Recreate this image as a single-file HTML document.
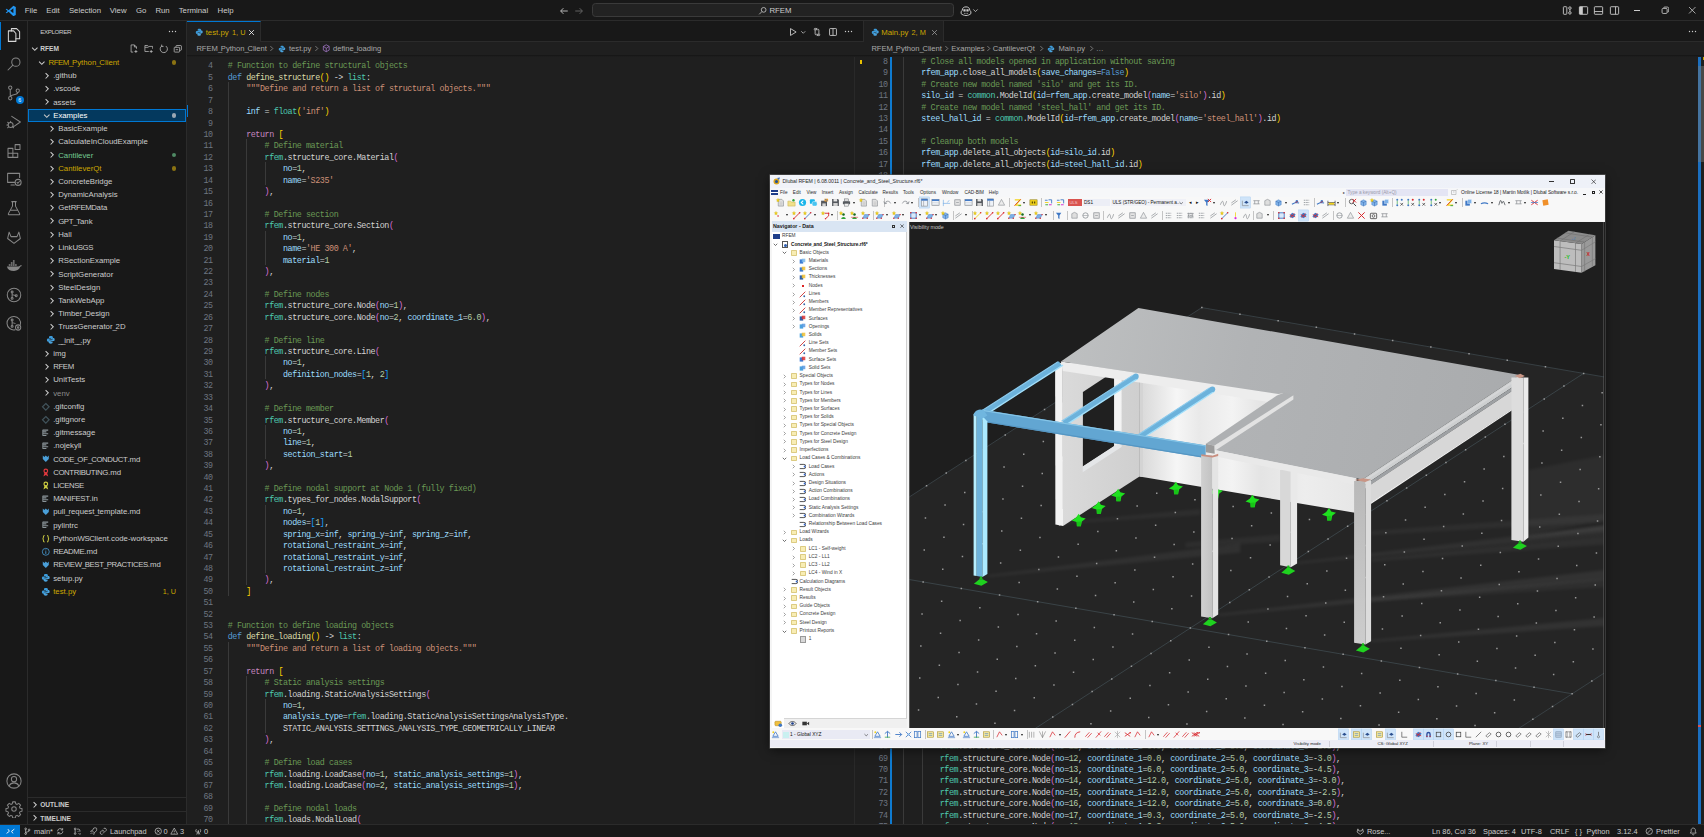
<!DOCTYPE html>
<html><head><meta charset="utf-8"><title>VS Code</title>
<style>
*{box-sizing:border-box;margin:0;padding:0}
html,body{width:1704px;height:837px;overflow:hidden;background:#1f1f1f}
body{font-family:"Liberation Sans",sans-serif;font-size:7.8px;color:#cccccc;position:relative}
i{font-style:normal}
.abs{position:absolute}
#title{position:absolute;left:0;top:0;width:1704px;height:21px;background:#181818;border-bottom:1px solid #2b2b2b}
#act{position:absolute;left:0;top:21px;width:28px;height:803px;background:#181818;border-right:1px solid #2b2b2b}
#side{position:absolute;left:28px;top:21px;width:158.500px;height:803px;background:#181818;border-right:1px solid #2b2b2b;overflow:hidden}
#status{position:absolute;left:0;top:824px;width:1704px;height:13px;background:#181818;border-top:1px solid #2b2b2b;font-size:7.400px;line-height:12px;white-space:nowrap}
.mi{position:absolute;top:5.500px;line-height:10px;font-size:7.800px;color:#cccccc;white-space:nowrap}
.tabs{position:absolute;top:21px;height:21px;background:#181818;border-bottom:1px solid #2b2b2b}
.tab{position:absolute;top:0;height:21px;background:#1f1f1f;border-right:1px solid #2b2b2b}
.bc{position:absolute;top:42px;height:13.400px;background:#1f1f1f;line-height:13.400px;white-space:nowrap;color:#a9a9a9;font-size:7.600px}
.bc span,.bc svg{position:absolute}
.ed{position:absolute;top:55.400px;height:768.600px;background:#1f1f1f;overflow:hidden}
.ln{position:absolute;left:0;height:11.420px;line-height:11.420px;width:100%;white-space:pre;font-family:"Liberation Mono",monospace;font-size:8.400px;letter-spacing:-0.420px;color:#d4d4d4}
.ln span{position:absolute;top:0}
.no{width:30px;text-align:right;color:#6e7681}
.s{color:#ce9178}.c{color:#6a9955}.n{color:#b5cea8}.b1{color:#ffd700}.b2{color:#da70d6}.b3{color:#179fff}.k{color:#569cd6}.r{color:#c586c0}.f{color:#dcdcaa}.t{color:#4ec9b0}.v{color:#9cdcfe}
.ig{position:absolute;width:1px;background:#3a3a3a}
.tr{position:absolute;left:0;width:158px;height:13.220px;line-height:13.220px;white-space:nowrap;font-size:7.800px}
.tr.sel{background:#04395e;outline:1px solid #0078d4;outline-offset:-1px}
.tr span{position:absolute;top:0}
.tw{width:9.600px;height:13.220px}
.chev{position:absolute;left:0;top:1.800px;width:9.600px;height:9.600px}
.fi{position:absolute;left:0;top:1.800px;width:9.600px;height:9.600px}
.dot{left:144px;top:4.400px !important;width:4.400px;height:4.400px;border-radius:50%}
.bdg{right:10px;color:#cca700;font-size:7.200px}
.sh{position:absolute;left:0;width:158px;height:13.220px;line-height:13.220px;font-size:6.600px;font-weight:bold;color:#cccccc}
.u{letter-spacing:-1.300px}
.uc{letter-spacing:-.38px}
.sb{position:absolute;top:0.500px;white-space:nowrap}

#rf{position:absolute;left:770px;top:175px;width:835px;height:572.800px;background:#f5f5f5;box-shadow:0 2px 10px rgba(0,0,0,.55),0 0 0 .6px #6a6a6a;font-size:5.200px;color:#222;overflow:hidden;z-index:10}
#rf .a{position:absolute;white-space:nowrap}
#rf .t{position:absolute;white-space:nowrap;line-height:8.200px;height:8.200px;color:#3c3c3c;font-size:4.800px}
#rf .t b{font-size:4.750px;color:#111}
#rf .u{letter-spacing:-.7px}
.tbi{position:absolute;width:9px;height:9px}
.sep{position:absolute;width:.6px;height:9px;background:#c4c4c4}
.dd{position:absolute;width:0;height:0;border-left:1.700px solid transparent;border-right:1.700px solid transparent;border-top:2.200px solid #1a1a1a}
.fold{position:absolute;width:6.600px;height:5.600px;background:#f8edb4;border:.5px solid #dccb82;border-radius:.8px}
.nch{position:absolute;width:5px;height:5px}
</style></head>
<body>
<div id=title><svg class=abs style="left:4.800px;top:4.800px" width="11.500" height="11.500" viewBox="0 0 24 24"><path d="M17.500 1.500L7.500 11 3.500 8 1.500 9l4 3.500-4 3.500 2 1 4-3 10 9.500 5-2.500V4z" fill="#2196f3"/><path d="M17.500 7v10l-6.500-5z" fill="#181818"/></svg><span class=mi style="left:24.7px">File</span><span class=mi style="left:46.2px">Edit</span><span class=mi style="left:68.9px">Selection</span><span class=mi style="left:109.8px">View</span><span class=mi style="left:136.0px">Go</span><span class=mi style="left:155.4px">Run</span><span class=mi style="left:178.7px">Terminal</span><span class=mi style="left:217.5px">Help</span><svg class=abs style="left:558.500px;top:5.500px" width="10" height="10" viewBox="0 0 16 16"><path d="M14 8H3M7 3.500L2.500 8 7 12.500" fill="none" stroke="#cccccc" stroke-width="1.400"/></svg><svg class=abs style="left:574px;top:5.500px" width="10" height="10" viewBox="0 0 16 16"><path d="M2 8h11M9 3.500L13.500 8 9 12.500" fill="none" stroke="#6b6b6b" stroke-width="1.400"/></svg><div class=abs style="left:591.500px;top:3.200px;width:362px;height:14.200px;background:#222222;border:1px solid #3a3a3a;border-radius:3.500px"></div><svg class=abs style="left:758px;top:5.500px" width="9.500" height="9.500" viewBox="0 0 16 16"><circle cx="9.500" cy="6.500" r="4" fill="none" stroke="#cccccc" stroke-width="1.300"/><path d="M6.500 9.500L2 14" stroke="#cccccc" stroke-width="1.300"/></svg><span class=mi style="left:769.4px">RFEM</span><svg class=abs style="left:959.500px;top:4.500px" width="12" height="12" viewBox="0 0 16 16"><path d="M3 7c0-3 2-4.500 5-4.500s5 1.500 5 4.500l1.500 2v2.500c-1.500 1.500-4 2.500-6.500 2.500s-5-1-6.500-2.500V9z" fill="none" stroke="#cccccc" stroke-width="1.300"/><path d="M4.500 5.500h3v3h-3zM8.500 5.500h3v3h-3z" fill="#cccccc"/><path d="M6.500 10.500v1.500M9.500 10.500v1.500" stroke="#cccccc" stroke-width="1.200"/></svg><svg class=abs style="left:972px;top:7px" width="7" height="7" viewBox="0 0 16 16"><path d="M3 5.500l5 5 5-5" fill="none" stroke="#cccccc" stroke-width="1.800"/></svg><svg class=abs style="left:1562px;top:5px" width="11" height="11" viewBox="0 0 16 16"><rect x="2" y="2.500" width="5" height="11" rx="1" fill="none" stroke="#cccccc" stroke-width="1.300"/><circle cx="11.500" cy="4.500" r="1.800" fill="none" stroke="#cccccc" stroke-width="1.300"/><circle cx="11.500" cy="11.500" r="1.800" fill="none" stroke="#cccccc" stroke-width="1.300"/><path d="M11.500 6.300v3.400" stroke="#cccccc" stroke-width="1.300"/></svg><svg class=abs style="left:1577.500px;top:5px" width="11" height="11" viewBox="0 0 16 16"><rect x="2" y="2.500" width="12" height="11" rx="1" fill="none" stroke="#cccccc" stroke-width="1.300"/><rect x="2" y="2.500" width="5" height="11" fill="#cccccc"/></svg><svg class=abs style="left:1593px;top:5px" width="11" height="11" viewBox="0 0 16 16"><rect x="2" y="2.500" width="12" height="11" rx="1" fill="none" stroke="#cccccc" stroke-width="1.300"/><path d="M2 9.500h12" stroke="#cccccc" stroke-width="1.300"/></svg><svg class=abs style="left:1608.500px;top:5px" width="11" height="11" viewBox="0 0 16 16"><rect x="2" y="2.500" width="12" height="11" rx="1" fill="none" stroke="#cccccc" stroke-width="1.300"/><path d="M9.500 2.500v11" stroke="#cccccc" stroke-width="1.300"/></svg><div class=abs style="left:1634px;top:10.200px;width:6px;height:0.800px;background:#cccccc"></div><svg class=abs style="left:1660.500px;top:6px" width="8.500" height="8.500" viewBox="0 0 16 16"><rect x="2" y="4.500" width="9.500" height="9.500" rx="2" fill="none" stroke="#cccccc" stroke-width="1.600"/><path d="M5 4V3.500c0-1 1-1.500 2-1.500h5c1.500 0 2.500 1 2.500 2.500v5c0 1-.5 2-1.500 2h-.8" fill="none" stroke="#cccccc" stroke-width="1.600"/></svg><svg class=abs style="left:1688px;top:6px" width="8.500" height="8.500" viewBox="0 0 16 16"><path d="M2 2l12 12M14 2L2 14" stroke="#cccccc" stroke-width="1.500"/></svg></div><div id=act><div class=abs style="left:0;top:-21px;width:28px;height:0"><div style="position:absolute;left:5px;top:26.4px;width:18px;height:18px"><svg width="18" height="18" viewBox="0 0 24 24"><path d="M8.500 6.500V3.500h7l4 4V17h-5" fill="none" stroke="#d7d7d7" stroke-width="1.350" stroke-linejoin="round" stroke-linecap="round"/><path d="M4.500 6.500h7l3 3.500V20.500h-10z" fill="none" stroke="#d7d7d7" stroke-width="1.350" stroke-linejoin="round" stroke-linecap="round"/></svg></div><div style="position:absolute;left:5px;top:55.2px;width:18px;height:18px"><svg width="18" height="18" viewBox="0 0 24 24"><circle cx="14.500" cy="9.500" r="5.500" fill="none" stroke="#868686" stroke-width="1.350" stroke-linejoin="round" stroke-linecap="round"/><path d="M10.500 13.500L4 20" fill="none" stroke="#868686" stroke-width="1.350" stroke-linejoin="round" stroke-linecap="round"/></svg></div><div style="position:absolute;left:5px;top:84.0px;width:18px;height:18px"><svg width="18" height="18" viewBox="0 0 24 24"><circle cx="7" cy="5" r="2.200" fill="none" stroke="#868686" stroke-width="1.350" stroke-linejoin="round" stroke-linecap="round"/><circle cx="7" cy="19" r="2.200" fill="none" stroke="#868686" stroke-width="1.350" stroke-linejoin="round" stroke-linecap="round"/><circle cx="17" cy="9" r="2.200" fill="none" stroke="#868686" stroke-width="1.350" stroke-linejoin="round" stroke-linecap="round"/><path d="M7 7.200v9.600M17 11.200c0 4-10 2-10 5.600" fill="none" stroke="#868686" stroke-width="1.350" stroke-linejoin="round" stroke-linecap="round"/></svg></div><div style="position:absolute;left:5px;top:112.8px;width:18px;height:18px"><svg width="18" height="18" viewBox="0 0 24 24"><path d="M9 4.500L20.500 12 11 18.500" fill="none" stroke="#868686" stroke-width="1.350" stroke-linejoin="round" stroke-linecap="round"/><circle cx="7.500" cy="16" r="3.300" fill="none" stroke="#868686" stroke-width="1.350" stroke-linejoin="round" stroke-linecap="round"/><path d="M7.500 12.700v-1.700M4.200 16H2.500M4.800 13.500L3.500 12.300M4.800 18.500L3.500 19.700M10.200 18.500l1.300 1.200" fill="none" stroke="#868686" stroke-width="1.350" stroke-linejoin="round" stroke-linecap="round"/></svg></div><div style="position:absolute;left:5px;top:141.6px;width:18px;height:18px"><svg width="18" height="18" viewBox="0 0 24 24"><path d="M4 8.500h6.500V15H17v5.500H4zM10.500 15H4M10.500 15v5.500" fill="none" stroke="#868686" stroke-width="1.350" stroke-linejoin="round" stroke-linecap="round"/><rect x="13.500" y="3.500" width="6.500" height="6.500" fill="none" stroke="#868686" stroke-width="1.350" stroke-linejoin="round" stroke-linecap="round"/></svg></div><div style="position:absolute;left:5px;top:170.4px;width:18px;height:18px"><svg width="18" height="18" viewBox="0 0 24 24"><path d="M13 16.500H3.500v-12h16V10M8 20h4.500" fill="none" stroke="#868686" stroke-width="1.350" stroke-linejoin="round" stroke-linecap="round"/><circle cx="17.500" cy="16.500" r="4" fill="none" stroke="#868686" stroke-width="1.350" stroke-linejoin="round" stroke-linecap="round"/><path d="M16 16.500l1.200 1.200 2-2.400" fill="none" stroke="#868686" stroke-width="1.350" stroke-linejoin="round" stroke-linecap="round" stroke-width="1.200"/></svg></div><div style="position:absolute;left:5px;top:199.2px;width:18px;height:18px"><svg width="18" height="18" viewBox="0 0 24 24"><path d="M9 3.500h6M10 3.500v6L4.500 19.500c-.3.700.2 1.500 1 1.500h13c.8 0 1.300-.8 1-1.500L14 9.500v-6M7.500 15h9" fill="none" stroke="#868686" stroke-width="1.350" stroke-linejoin="round" stroke-linecap="round"/></svg></div><div style="position:absolute;left:5px;top:228.0px;width:18px;height:18px"><svg width="18" height="18" viewBox="0 0 24 24"><path d="M12 20.500L3.500 14l2-8.500 2.500 6h8l2.500-6 2 8.500z" fill="none" stroke="#868686" stroke-width="1.350" stroke-linejoin="round" stroke-linecap="round"/></svg></div><div style="position:absolute;left:5px;top:256.8px;width:18px;height:18px"><svg width="18" height="18" viewBox="0 0 24 24"><path d="M2.500 12.500h15.500c.8 0 2-.5 2.500-1.500 1 .3 1.800.2 2.200 0-.3 1-1.200 1.800-2.500 2-1 3.500-4 5.500-8.200 5.500-5 0-8.700-2-9.500-6z" fill="#868686"/><path d="M5 11.500h2.200v-2H5zM7.800 11.500H10v-2H7.800zM10.600 11.500h2.200v-2h-2.200zM13.400 11.500h2.200v-2h-2.200zM7.800 8.900H10v-2H7.800zM10.600 8.900h2.200v-2h-2.200zM10.600 6.300h2.200v-2h-2.200z" fill="#868686"/></svg></div><div style="position:absolute;left:5px;top:285.6px;width:18px;height:18px"><svg width="18" height="18" viewBox="0 0 24 24"><circle cx="12" cy="12" r="9" fill="none" stroke="#868686" stroke-width="1.350" stroke-linejoin="round" stroke-linecap="round"/><circle cx="9.500" cy="8" r="1.300" fill="none" stroke="#868686" stroke-width="1.350" stroke-linejoin="round" stroke-linecap="round"/><circle cx="9.500" cy="16.500" r="1.300" fill="none" stroke="#868686" stroke-width="1.350" stroke-linejoin="round" stroke-linecap="round"/><circle cx="15" cy="13" r="1.300" fill="none" stroke="#868686" stroke-width="1.350" stroke-linejoin="round" stroke-linecap="round"/><path d="M9.500 9.300v5.900M9.500 11.500l4.300 1.200" fill="none" stroke="#868686" stroke-width="1.350" stroke-linejoin="round" stroke-linecap="round"/></svg></div><div style="position:absolute;left:5px;top:314.4px;width:18px;height:18px"><svg width="18" height="18" viewBox="0 0 24 24"><path d="M20.500 14a9 9 0 1 0-7 7" fill="none" stroke="#868686" stroke-width="1.350" stroke-linejoin="round" stroke-linecap="round"/><circle cx="9.500" cy="8" r="1.300" fill="none" stroke="#868686" stroke-width="1.350" stroke-linejoin="round" stroke-linecap="round"/><circle cx="9.500" cy="16.500" r="1.300" fill="none" stroke="#868686" stroke-width="1.350" stroke-linejoin="round" stroke-linecap="round"/><path d="M9.500 9.300v5.900M9.500 11.500l4 1" fill="none" stroke="#868686" stroke-width="1.350" stroke-linejoin="round" stroke-linecap="round"/><circle cx="17.500" cy="18" r="3.500" fill="none" stroke="#868686" stroke-width="1.350" stroke-linejoin="round" stroke-linecap="round"/><circle cx="17.500" cy="18" r="1" fill="none" stroke="#868686" stroke-width="1.350" stroke-linejoin="round" stroke-linecap="round"/></svg></div><div style="position:absolute;left:5px;top:771.6px;width:18px;height:18px"><svg width="18" height="18" viewBox="0 0 24 24"><circle cx="12" cy="12" r="9.500" fill="none" stroke="#868686" stroke-width="1.350" stroke-linejoin="round" stroke-linecap="round"/><circle cx="12" cy="9.500" r="3.500" fill="none" stroke="#868686" stroke-width="1.350" stroke-linejoin="round" stroke-linecap="round"/><path d="M5.500 18.500c1.500-3 4-4 6.500-4s5 1 6.500 4" fill="none" stroke="#868686" stroke-width="1.350" stroke-linejoin="round" stroke-linecap="round"/></svg></div><div style="position:absolute;left:5px;top:800.4px;width:18px;height:18px"><svg width="18" height="18" viewBox="0 0 24 24"><circle cx="12" cy="12" r="3" fill="none" stroke="#868686" stroke-width="1.350" stroke-linejoin="round" stroke-linecap="round"/><path d="M10.200 2.500h3.600l.5 2.600 1.800.8 2.200-1.500 2.500 2.500-1.500 2.200.8 1.800 2.600.5v3.600l-2.600.5-.8 1.800 1.500 2.200-2.500 2.500-2.200-1.500-1.800.8-.5 2.600h-3.600l-.5-2.600-1.800-.8-2.200 1.500-2.500-2.500 1.500-2.200-.8-1.800-2.600-.5v-3.600l2.600-.5.8-1.800-1.500-2.200 2.500-2.500 2.200 1.500 1.800-.8z" fill="none" stroke="#868686" stroke-width="1.350" stroke-linejoin="round" stroke-linecap="round" stroke-width="1.300"/></svg></div><div style="position:absolute;left:0;top:21.5px;width:1.2px;height:28px;background:#0078d4"></div><div style="position:absolute;left:15.5px;top:95.5px;width:8.6px;height:8.6px;border-radius:50%;background:#0078d4;color:#fff;font-size:5.4px;line-height:8.6px;text-align:center">6</div></div></div><div id=side><span class=abs style="left:12.200px;top:5.500px;line-height:10px;font-size:6.200px;letter-spacing:-.35px;color:#cccccc">EXPLORER</span><svg class=abs style="left:140.0px;top:9.2px" width="9" height="3" viewBox="0 0 18 6"><circle cx="3" cy="3" r="1.400" fill="#cccccc"/><circle cx="9" cy="3" r="1.400" fill="#cccccc"/><circle cx="15" cy="3" r="1.400" fill="#cccccc"/></svg><div class=sh style="top:21px"><svg class=abs style="left:2px;top:2px;width:9.600px;height:9.600px" viewBox="0 0 16 16"><path d="M3.5 6l4.5 4.5L12.5 6" fill="none" stroke="#cccccc" stroke-width="1.7"/></svg><span class=abs style="left:12.200px">RFEM</span><svg class=abs style="left:101px;top:2px" width="9.600" height="9.600" viewBox="0 0 16 16"><path d="M9 1.500H3.500v12H7M9 1.500l3.500 3.500V8M9 1.500V5h3.500M11.500 10v5M9 12.500h5" fill="none" stroke="#c5c5c5" stroke-width="1.200"/></svg><svg class=abs style="left:115.500px;top:2px" width="9.600" height="9.600" viewBox="0 0 16 16"><path d="M8 12.500H1.500v-10H6l1.500 1.500h7V8M1.500 5.500H7.500M12 10v5M9.500 12.500h5" fill="none" stroke="#c5c5c5" stroke-width="1.200"/></svg><svg class=abs style="left:130.500px;top:2px" width="9.600" height="9.600" viewBox="0 0 16 16"><path d="M4.500 3.500A6 6 0 1 0 11.500 3.500M4.500 1v3h3" fill="none" stroke="#c5c5c5" stroke-width="1.300"/></svg><svg class=abs style="left:145px;top:2px" width="9.600" height="9.600" viewBox="0 0 16 16"><rect x="2" y="5.500" width="9" height="8" rx="1" fill="none" stroke="#c5c5c5" stroke-width="1.200"/><path d="M5 5.500V3.500c0-.5.500-1 1-1h7c.5 0 1 .5 1 1v6c0 .5-.5 1-1 1h-2M4.500 9.500h4" fill="none" stroke="#c5c5c5" stroke-width="1.200"/></svg></div><div class=abs style="left:0;top:-21px;width:158px;height:0"><div class="tr" style="top:56.00px"><span class=tw style="left:9.1px"><svg class=chev viewBox="0 0 16 16"><path d="M3.5 6l4.5 4.5L12.5 6" fill="none" stroke="#cccccc" stroke-width="1.7"/></svg></span><span class=tl style="left:20.4px;color:#cca700"><i class=uc>RFEM</i><i class=u>_</i>Python<i class=u>_</i>Client</span><span class=dot style="background:#8a7212"></span></div>
<div class="tr" style="top:69.22px"><span class=tw style="left:13.9px"><svg class=chev viewBox="0 0 16 16"><path d="M6 3.5l4.5 4.5L6 12.5" fill="none" stroke="#cccccc" stroke-width="1.7"/></svg></span><span class=tl style="left:25.2px;color:#cccccc">.github</span></div>
<div class="tr" style="top:82.44px"><span class=tw style="left:13.9px"><svg class=chev viewBox="0 0 16 16"><path d="M6 3.5l4.5 4.5L6 12.5" fill="none" stroke="#cccccc" stroke-width="1.7"/></svg></span><span class=tl style="left:25.2px;color:#cccccc">.vscode</span></div>
<div class="tr" style="top:95.66px"><span class=tw style="left:13.9px"><svg class=chev viewBox="0 0 16 16"><path d="M6 3.5l4.5 4.5L6 12.5" fill="none" stroke="#cccccc" stroke-width="1.7"/></svg></span><span class=tl style="left:25.2px;color:#cccccc">assets</span></div>
<div class="tr sel" style="top:108.88px"><span class=tw style="left:13.9px"><svg class=chev viewBox="0 0 16 16"><path d="M3.5 6l4.5 4.5L12.5 6" fill="none" stroke="#cccccc" stroke-width="1.7"/></svg></span><span class=tl style="left:25.2px;color:#ffffff">Examples</span><span class=dot style="background:#9aa7b3"></span></div>
<div class="tr" style="top:122.10px"><span class=tw style="left:18.9px"><svg class=chev viewBox="0 0 16 16"><path d="M6 3.5l4.5 4.5L6 12.5" fill="none" stroke="#cccccc" stroke-width="1.7"/></svg></span><span class=tl style="left:30.2px;color:#cccccc">BasicExample</span></div>
<div class="tr" style="top:135.32px"><span class=tw style="left:18.9px"><svg class=chev viewBox="0 0 16 16"><path d="M6 3.5l4.5 4.5L6 12.5" fill="none" stroke="#cccccc" stroke-width="1.7"/></svg></span><span class=tl style="left:30.2px;color:#cccccc">CalculateInCloudExample</span></div>
<div class="tr" style="top:148.54px"><span class=tw style="left:18.9px"><svg class=chev viewBox="0 0 16 16"><path d="M6 3.5l4.5 4.5L6 12.5" fill="none" stroke="#cccccc" stroke-width="1.7"/></svg></span><span class=tl style="left:30.2px;color:#73c991">Cantilever</span><span class=dot style="background:#4f8a64"></span></div>
<div class="tr" style="top:161.76px"><span class=tw style="left:18.9px"><svg class=chev viewBox="0 0 16 16"><path d="M6 3.5l4.5 4.5L6 12.5" fill="none" stroke="#cccccc" stroke-width="1.7"/></svg></span><span class=tl style="left:30.2px;color:#cca700">CantileverQt</span><span class=dot style="background:#8a7212"></span></div>
<div class="tr" style="top:174.98px"><span class=tw style="left:18.9px"><svg class=chev viewBox="0 0 16 16"><path d="M6 3.5l4.5 4.5L6 12.5" fill="none" stroke="#cccccc" stroke-width="1.7"/></svg></span><span class=tl style="left:30.2px;color:#cccccc">ConcreteBridge</span></div>
<div class="tr" style="top:188.20px"><span class=tw style="left:18.9px"><svg class=chev viewBox="0 0 16 16"><path d="M6 3.5l4.5 4.5L6 12.5" fill="none" stroke="#cccccc" stroke-width="1.7"/></svg></span><span class=tl style="left:30.2px;color:#cccccc">DynamicAnalysis</span></div>
<div class="tr" style="top:201.42px"><span class=tw style="left:18.9px"><svg class=chev viewBox="0 0 16 16"><path d="M6 3.5l4.5 4.5L6 12.5" fill="none" stroke="#cccccc" stroke-width="1.7"/></svg></span><span class=tl style="left:30.2px;color:#cccccc">Get<i class=uc>RFEMD</i>ata</span></div>
<div class="tr" style="top:214.64px"><span class=tw style="left:18.9px"><svg class=chev viewBox="0 0 16 16"><path d="M6 3.5l4.5 4.5L6 12.5" fill="none" stroke="#cccccc" stroke-width="1.7"/></svg></span><span class=tl style="left:30.2px;color:#cccccc"><i class=uc>GPT</i><i class=u>_</i>Tank</span></div>
<div class="tr" style="top:227.86px"><span class=tw style="left:18.9px"><svg class=chev viewBox="0 0 16 16"><path d="M6 3.5l4.5 4.5L6 12.5" fill="none" stroke="#cccccc" stroke-width="1.7"/></svg></span><span class=tl style="left:30.2px;color:#cccccc">Hall</span></div>
<div class="tr" style="top:241.08px"><span class=tw style="left:18.9px"><svg class=chev viewBox="0 0 16 16"><path d="M6 3.5l4.5 4.5L6 12.5" fill="none" stroke="#cccccc" stroke-width="1.7"/></svg></span><span class=tl style="left:30.2px;color:#cccccc">Link<i class=uc>USGS</i></span></div>
<div class="tr" style="top:254.30px"><span class=tw style="left:18.9px"><svg class=chev viewBox="0 0 16 16"><path d="M6 3.5l4.5 4.5L6 12.5" fill="none" stroke="#cccccc" stroke-width="1.7"/></svg></span><span class=tl style="left:30.2px;color:#cccccc">RSectionExample</span></div>
<div class="tr" style="top:267.52px"><span class=tw style="left:18.9px"><svg class=chev viewBox="0 0 16 16"><path d="M6 3.5l4.5 4.5L6 12.5" fill="none" stroke="#cccccc" stroke-width="1.7"/></svg></span><span class=tl style="left:30.2px;color:#cccccc">ScriptGenerator</span></div>
<div class="tr" style="top:280.74px"><span class=tw style="left:18.9px"><svg class=chev viewBox="0 0 16 16"><path d="M6 3.5l4.5 4.5L6 12.5" fill="none" stroke="#cccccc" stroke-width="1.7"/></svg></span><span class=tl style="left:30.2px;color:#cccccc">SteelDesign</span></div>
<div class="tr" style="top:293.96px"><span class=tw style="left:18.9px"><svg class=chev viewBox="0 0 16 16"><path d="M6 3.5l4.5 4.5L6 12.5" fill="none" stroke="#cccccc" stroke-width="1.7"/></svg></span><span class=tl style="left:30.2px;color:#cccccc">TankWebApp</span></div>
<div class="tr" style="top:307.18px"><span class=tw style="left:18.9px"><svg class=chev viewBox="0 0 16 16"><path d="M6 3.5l4.5 4.5L6 12.5" fill="none" stroke="#cccccc" stroke-width="1.7"/></svg></span><span class=tl style="left:30.2px;color:#cccccc">Timber<i class=u>_</i>Design</span></div>
<div class="tr" style="top:320.40px"><span class=tw style="left:18.9px"><svg class=chev viewBox="0 0 16 16"><path d="M6 3.5l4.5 4.5L6 12.5" fill="none" stroke="#cccccc" stroke-width="1.7"/></svg></span><span class=tl style="left:30.2px;color:#cccccc">TrussGenerator<i class=u>_</i>2D</span></div>
<div class="tr" style="top:333.62px"><span class=tw style="left:18.4px"><svg class=fi viewBox="0 0 16 16"><path d="M8 1.5c-2.2 0-3 .8-3 2V5h3.2v.8H3.6C2.3 5.800 1.500 6.800 1.500 8.500s.8 2.700 2 2.700H5V9.400c0-1.200 1-2 2.200-2h2.600c1 0 1.700-.8 1.700-1.800V3.500c0-1.200-1.300-2-3.500-2z" fill="#3b9ad9"/><path d="M8 14.500c2.200 0 3-.8 3-2V11H7.800v-.8h4.600c1.300 0 2.100-1 2.100-2.700s-.8-2.700-2-2.700H11v1.800c0 1.200-1 2-2.200 2H6.200c-1 0-1.700.8-1.700 1.800v2.100c0 1.200 1.300 2 3.500 2z" fill="#4aa3dd"/></svg></span><span class=tl style="left:30.2px;color:#cccccc"><i class=u>_</i><i class=u>_</i>init<i class=u>_</i><i class=u>_</i>.py</span></div>
<div class="tr" style="top:346.84px"><span class=tw style="left:13.9px"><svg class=chev viewBox="0 0 16 16"><path d="M6 3.5l4.5 4.5L6 12.5" fill="none" stroke="#cccccc" stroke-width="1.7"/></svg></span><span class=tl style="left:25.2px;color:#cccccc">img</span></div>
<div class="tr" style="top:360.06px"><span class=tw style="left:13.9px"><svg class=chev viewBox="0 0 16 16"><path d="M6 3.5l4.5 4.5L6 12.5" fill="none" stroke="#cccccc" stroke-width="1.7"/></svg></span><span class=tl style="left:25.2px;color:#cccccc"><i class=uc>RFEM</i></span></div>
<div class="tr" style="top:373.28px"><span class=tw style="left:13.9px"><svg class=chev viewBox="0 0 16 16"><path d="M6 3.5l4.5 4.5L6 12.5" fill="none" stroke="#cccccc" stroke-width="1.7"/></svg></span><span class=tl style="left:25.2px;color:#cccccc">UnitTests</span></div>
<div class="tr" style="top:386.50px"><span class=tw style="left:13.9px"><svg class=chev viewBox="0 0 16 16"><path d="M6 3.5l4.5 4.5L6 12.5" fill="none" stroke="#cccccc" stroke-width="1.7"/></svg></span><span class=tl style="left:25.2px;color:#8c8c8c">venv</span></div>
<div class="tr" style="top:399.72px"><span class=tw style="left:13.4px"><svg class=fi viewBox="0 0 16 16"><path d="M8 2.500L13.500 8 8 13.500 2.500 8z" fill="none" stroke="#41535b" stroke-width="2"/></svg></span><span class=tl style="left:25.2px;color:#cccccc">.gitconfig</span></div>
<div class="tr" style="top:412.94px"><span class=tw style="left:13.4px"><svg class=fi viewBox="0 0 16 16"><path d="M8 2.500L13.500 8 8 13.500 2.500 8z" fill="none" stroke="#41535b" stroke-width="2"/></svg></span><span class=tl style="left:25.2px;color:#cccccc">.gitignore</span></div>
<div class="tr" style="top:426.16px"><span class=tw style="left:13.4px"><svg class=fi viewBox="0 0 16 16"><path d="M3 3.500h9M3 6.500h6M3 9.500h9M3 12.500h6" stroke="#8a9499" stroke-width="1.800"/><path d="M3 3v10" stroke="#8a9499" stroke-width="1.500"/></svg></span><span class=tl style="left:25.2px;color:#cccccc">.gitmessage</span></div>
<div class="tr" style="top:439.38px"><span class=tw style="left:13.4px"><svg class=fi viewBox="0 0 16 16"><path d="M3 3.500h9M3 6.500h6M3 9.500h9M3 12.500h6" stroke="#8a9499" stroke-width="1.800"/><path d="M3 3v10" stroke="#8a9499" stroke-width="1.500"/></svg></span><span class=tl style="left:25.2px;color:#cccccc">.nojekyll</span></div>
<div class="tr" style="top:452.60px"><span class=tw style="left:13.4px"><svg class=fi viewBox="0 0 16 16"><path d="M3 2.500v6l5 5 5-5v-6l-2.500 2.500-2.500-2.500-2.500 2.500z" fill="#4a9fd8"/></svg></span><span class=tl style="left:25.2px;color:#cccccc"><i class=uc>CODE</i><i class=u>_</i>OF<i class=u>_</i><i class=uc>CONDUCT</i>.md</span></div>
<div class="tr" style="top:465.82px"><span class=tw style="left:13.4px"><svg class=fi viewBox="0 0 16 16"><circle cx="8" cy="5" r="3" fill="none" stroke="#e0383e" stroke-width="2"/><path d="M6 7.500L4 14l4-2.500 4 2.500-2-6.500" fill="#e0383e"/></svg></span><span class=tl style="left:25.2px;color:#cccccc"><i class=uc>CONTRIBUTING</i>.md</span></div>
<div class="tr" style="top:479.04px"><span class=tw style="left:13.4px"><svg class=fi viewBox="0 0 16 16"><circle cx="8" cy="5" r="3" fill="none" stroke="#cbcb41" stroke-width="2"/><path d="M6 7.500L4 14l4-2.500 4 2.500-2-6.500" fill="#cbcb41"/></svg></span><span class=tl style="left:25.2px;color:#cccccc"><i class=uc>LICENSE</i></span></div>
<div class="tr" style="top:492.26px"><span class=tw style="left:13.4px"><svg class=fi viewBox="0 0 16 16"><path d="M3 3.500h9M3 6.500h6M3 9.500h9M3 12.500h6" stroke="#8a9499" stroke-width="1.800"/><path d="M3 3v10" stroke="#8a9499" stroke-width="1.500"/></svg></span><span class=tl style="left:25.2px;color:#cccccc"><i class=uc>MANIFEST</i>.in</span></div>
<div class="tr" style="top:505.48px"><span class=tw style="left:13.4px"><svg class=fi viewBox="0 0 16 16"><path d="M3 2.500v6l5 5 5-5v-6l-2.500 2.500-2.500-2.500-2.500 2.500z" fill="#4a9fd8"/></svg></span><span class=tl style="left:25.2px;color:#cccccc">pull<i class=u>_</i>request<i class=u>_</i>template.md</span></div>
<div class="tr" style="top:518.70px"><span class=tw style="left:13.4px"><svg class=fi viewBox="0 0 16 16"><path d="M3 3.500h9M3 6.500h6M3 9.500h9M3 12.500h6" stroke="#8a9499" stroke-width="1.800"/><path d="M3 3v10" stroke="#8a9499" stroke-width="1.500"/></svg></span><span class=tl style="left:25.2px;color:#cccccc">pylintrc</span></div>
<div class="tr" style="top:531.92px"><span class=tw style="left:13.4px"><svg class=fi viewBox="0 0 16 16"><path d="M6 2.500c-2 0-2 1-2 2.500s0 3-1.500 3C4 8 4 9.500 4 11s0 2.500 2 2.500M10 2.500c2 0 2 1 2 2.500s0 3 1.500 3C12 8 12 9.500 12 11s0 2.500-2 2.500" fill="none" stroke="#cbcb41" stroke-width="1.700"/></svg></span><span class=tl style="left:25.2px;color:#cccccc">Python<i class=uc>WSC</i>lient.code-workspace</span></div>
<div class="tr" style="top:545.14px"><span class=tw style="left:13.4px"><svg class=fi viewBox="0 0 16 16"><circle cx="8" cy="8" r="5.800" fill="none" stroke="#4a9fd8" stroke-width="1.300"/><path d="M8 7v4.500M8 4.300v1.400" stroke="#4a9fd8" stroke-width="1.500"/></svg></span><span class=tl style="left:25.2px;color:#cccccc"><i class=uc>README</i>.md</span></div>
<div class="tr" style="top:558.36px"><span class=tw style="left:13.4px"><svg class=fi viewBox="0 0 16 16"><path d="M3 2.500v6l5 5 5-5v-6l-2.500 2.500-2.500-2.500-2.500 2.500z" fill="#4a9fd8"/></svg></span><span class=tl style="left:25.2px;color:#cccccc"><i class=uc>REVIEW</i><i class=u>_</i><i class=uc>BEST</i><i class=u>_</i><i class=uc>PRACTICES</i>.md</span></div>
<div class="tr" style="top:571.58px"><span class=tw style="left:13.4px"><svg class=fi viewBox="0 0 16 16"><path d="M8 1.5c-2.2 0-3 .8-3 2V5h3.2v.8H3.6C2.3 5.800 1.500 6.800 1.500 8.500s.8 2.700 2 2.700H5V9.400c0-1.200 1-2 2.200-2h2.600c1 0 1.700-.8 1.700-1.800V3.500c0-1.200-1.300-2-3.500-2z" fill="#3b9ad9"/><path d="M8 14.500c2.200 0 3-.8 3-2V11H7.800v-.8h4.600c1.300 0 2.100-1 2.100-2.700s-.8-2.700-2-2.700H11v1.800c0 1.200-1 2-2.200 2H6.200c-1 0-1.700.8-1.700 1.800v2.100c0 1.200 1.300 2 3.500 2z" fill="#4aa3dd"/></svg></span><span class=tl style="left:25.2px;color:#cccccc">setup.py</span></div>
<div class="tr" style="top:584.80px"><span class=tw style="left:13.4px"><svg class=fi viewBox="0 0 16 16"><path d="M8 1.5c-2.2 0-3 .8-3 2V5h3.2v.8H3.6C2.3 5.800 1.500 6.800 1.500 8.500s.8 2.700 2 2.700H5V9.400c0-1.200 1-2 2.200-2h2.600c1 0 1.700-.8 1.700-1.800V3.500c0-1.200-1.300-2-3.500-2z" fill="#3b9ad9"/><path d="M8 14.500c2.200 0 3-.8 3-2V11H7.800v-.8h4.600c1.300 0 2.100-1 2.100-2.700s-.8-2.700-2-2.700H11v1.800c0 1.200-1 2-2.200 2H6.200c-1 0-1.700.8-1.700 1.800v2.100c0 1.200 1.300 2 3.500 2z" fill="#4aa3dd"/></svg></span><span class=tl style="left:25.2px;color:#cca700">test.py</span><span class=bdg>1, U</span></div></div><div class=sh style="top:776.2px;border-top:1px solid #2b2b2b;height:13.400px"><svg class=abs style="left:2px;top:1.500px;width:9.600px;height:9.600px" viewBox="0 0 16 16"><path d="M6 3.5l4.5 4.5L6 12.5" fill="none" stroke="#cccccc" stroke-width="1.7"/></svg><span class=abs style="left:12.200px">OUTLINE</span></div><div class=sh style="top:789.6px;border-top:1px solid #2b2b2b;height:13.400px"><svg class=abs style="left:2px;top:1.500px;width:9.600px;height:9.600px" viewBox="0 0 16 16"><path d="M6 3.5l4.5 4.5L6 12.5" fill="none" stroke="#cccccc" stroke-width="1.7"/></svg><span class=abs style="left:12.200px">TIMELINE</span></div></div><div class=tabs style="left:186.500px;width:676px"><div class=tab style="left:0;width:74.500px;border-top:1px solid #0078d4"><svg class=abs style="left:8.0px;top:6.2px;width:8.5px;height:8.5px" viewBox="0 0 16 16"><path d="M8 1.5c-2.2 0-3 .8-3 2V5h3.2v.8H3.6C2.3 5.800 1.500 6.800 1.500 8.500s.8 2.700 2 2.700H5V9.400c0-1.200 1-2 2.200-2h2.600c1 0 1.700-.8 1.700-1.800V3.500c0-1.200-1.300-2-3.500-2z" fill="#3b9ad9"/><path d="M8 14.500c2.200 0 3-.8 3-2V11H7.800v-.8h4.600c1.300 0 2.100-1 2.100-2.700s-.8-2.700-2-2.700H11v1.800c0 1.200-1 2-2.200 2H6.200c-1 0-1.700.8-1.700 1.800v2.100c0 1.200 1.300 2 3.500 2z" fill="#4aa3dd"/></svg><span class=abs style="left:19.200px;top:5.600px;line-height:10px;color:#cca700;white-space:nowrap">test.py</span><span class=abs style="left:45.500px;top:5.600px;line-height:10px;color:#cca700;white-space:nowrap;font-size:7.400px">1, U</span><svg class=abs style="left:61.5px;top:7.2px" width="7" height="7" viewBox="0 0 16 16"><path d="M2.500 2.500l11 11M13.500 2.500l-11 11" stroke="#ffffff" stroke-width="1.800"/></svg></div><svg class=abs style="left:601.500px;top:5.500px" width="10" height="10" viewBox="0 0 16 16"><path d="M4 2.500v11L13 8z" fill="none" stroke="#cccccc" stroke-width="1.400" stroke-linejoin="round"/></svg><svg class=abs style="left:613.500px;top:7.500px" width="6.500" height="6.500" viewBox="0 0 16 16"><path d="M3 5.500l5 5 5-5" fill="none" stroke="#cccccc" stroke-width="1.800"/></svg><svg class=abs style="left:625.500px;top:5.500px" width="10" height="10" viewBox="0 0 16 16"><path d="M5 5v6c0 1 .5 1.500 1.500 1.500h3M11 11V5c0-1-.5-1.500-1.500-1.500h-3" fill="none" stroke="#cccccc" stroke-width="1.300"/><circle cx="5" cy="3.500" r="1.500" fill="none" stroke="#cccccc" stroke-width="1.200"/><circle cx="11" cy="12.500" r="1.500" fill="none" stroke="#cccccc" stroke-width="1.200"/><path d="M8 1.500L6 3.500 8 5.500M8 10.500l2 2-2 2" fill="none" stroke="#cccccc" stroke-width="1.200"/></svg><svg class=abs style="left:641px;top:5.500px" width="10" height="10" viewBox="0 0 16 16"><rect x="2.500" y="2.500" width="11" height="11" rx="1" fill="none" stroke="#cccccc" stroke-width="1.400"/><path d="M8 2.500v11" stroke="#cccccc" stroke-width="1.400"/></svg><svg class=abs style="left:657.5px;top:9.2px" width="9" height="3" viewBox="0 0 18 6"><circle cx="3" cy="3" r="1.400" fill="#cccccc"/><circle cx="9" cy="3" r="1.400" fill="#cccccc"/><circle cx="15" cy="3" r="1.400" fill="#cccccc"/></svg></div><div class=tabs style="left:863px;width:841px"><div class=tab style="left:0;width:80.500px"><svg class=abs style="left:7.5px;top:7.1px;width:8.5px;height:8.5px" viewBox="0 0 16 16"><path d="M8 1.5c-2.2 0-3 .8-3 2V5h3.2v.8H3.6C2.3 5.800 1.500 6.800 1.500 8.500s.8 2.700 2 2.700H5V9.400c0-1.200 1-2 2.200-2h2.600c1 0 1.700-.8 1.700-1.800V3.500c0-1.200-1.300-2-3.500-2z" fill="#3b9ad9"/><path d="M8 14.500c2.200 0 3-.8 3-2V11H7.800v-.8h4.600c1.300 0 2.100-1 2.100-2.700s-.8-2.700-2-2.700H11v1.800c0 1.200-1 2-2.200 2H6.200c-1 0-1.700.8-1.700 1.800v2.100c0 1.200 1.300 2 3.500 2z" fill="#4aa3dd"/></svg><span class=abs style="left:18.200px;top:6.500px;line-height:10px;color:#cca700;white-space:nowrap">Main.py</span><span class=abs style="left:48.500px;top:6.500px;line-height:10px;color:#cca700;white-space:nowrap;font-size:7.400px">2, M</span><svg class=abs style="left:67.5px;top:8.1px" width="7" height="7" viewBox="0 0 16 16"><path d="M2.500 2.500l11 11M13.500 2.500l-11 11" stroke="#9d9d9d" stroke-width="1.800"/></svg></div><svg class=abs style="left:824.5px;top:9.2px" width="9" height="3" viewBox="0 0 18 6"><circle cx="3" cy="3" r="1.400" fill="#cccccc"/><circle cx="9" cy="3" r="1.400" fill="#cccccc"/><circle cx="15" cy="3" r="1.400" fill="#cccccc"/></svg></div><div class=abs style="left:862.500px;top:21px;width:1px;height:803px;background:#2b2b2b"></div><div class=bc style="left:186.500px;width:676px"><span style="left:9.900px">RFEM<i class=u>_</i>Python<i class=u>_</i>Client</span><svg style="left:81.5px;top:3.200px" width="7" height="7" viewBox="0 0 16 16"><path d="M5.500 2.500L11 8l-5.500 5.500" fill="none" stroke="#a9a9a9" stroke-width="1.500"/></svg><svg style="left:91px;top:2.600px;width:8px;height:8px" viewBox="0 0 16 16"><path d="M8 1.5c-2.2 0-3 .8-3 2V5h3.2v.8H3.6C2.3 5.800 1.500 6.800 1.500 8.500s.8 2.700 2 2.700H5V9.400c0-1.200 1-2 2.200-2h2.600c1 0 1.700-.8 1.700-1.800V3.500c0-1.200-1.300-2-3.500-2z" fill="#3b9ad9"/><path d="M8 14.500c2.200 0 3-.8 3-2V11H7.800v-.8h4.600c1.300 0 2.100-1 2.100-2.700s-.8-2.700-2-2.700H11v1.800c0 1.200-1 2-2.200 2H6.200c-1 0-1.700.8-1.700 1.800v2.100c0 1.200 1.300 2 3.500 2z" fill="#4aa3dd"/></svg><span style="left:102.500px">test.py</span><svg style="left:126.5px;top:3.200px" width="7" height="7" viewBox="0 0 16 16"><path d="M5.500 2.500L11 8l-5.500 5.500" fill="none" stroke="#a9a9a9" stroke-width="1.500"/></svg><svg style="left:135.5px;top:2.400px" width="8.500" height="8.500" viewBox="0 0 16 16"><path d="M8 1.500l5.500 3v7L8 14.500l-5.500-3v-7zM2.500 4.500L8 8l5.500-3.500M8 8v6.500" fill="none" stroke="#b180d7" stroke-width="1.300" stroke-linejoin="round"/></svg><span style="left:146.500px">define<i class=u>_</i>loading</span></div><div class=bc style="left:863px;width:841px"><span style="left:8.400px">RFEM<i class=u>_</i>Python<i class=u>_</i>Client</span><svg style="left:80.0px;top:3.200px" width="7" height="7" viewBox="0 0 16 16"><path d="M5.500 2.500L11 8l-5.500 5.500" fill="none" stroke="#a9a9a9" stroke-width="1.500"/></svg><span style="left:88.300px">Examples</span><svg style="left:122.0px;top:3.200px" width="7" height="7" viewBox="0 0 16 16"><path d="M5.500 2.500L11 8l-5.500 5.500" fill="none" stroke="#a9a9a9" stroke-width="1.500"/></svg><span style="left:129.700px">CantileverQt</span><svg style="left:175.0px;top:3.200px" width="7" height="7" viewBox="0 0 16 16"><path d="M5.500 2.500L11 8l-5.500 5.500" fill="none" stroke="#a9a9a9" stroke-width="1.500"/></svg><svg style="left:184px;top:2.600px;width:8px;height:8px" viewBox="0 0 16 16"><path d="M8 1.5c-2.2 0-3 .8-3 2V5h3.2v.8H3.6C2.3 5.800 1.500 6.800 1.500 8.500s.8 2.700 2 2.700H5V9.400c0-1.200 1-2 2.200-2h2.600c1 0 1.700-.8 1.700-1.800V3.500c0-1.200-1.300-2-3.500-2z" fill="#3b9ad9"/><path d="M8 14.500c2.200 0 3-.8 3-2V11H7.800v-.8h4.600c1.300 0 2.100-1 2.100-2.700s-.8-2.700-2-2.700H11v1.800c0 1.200-1 2-2.200 2H6.200c-1 0-1.700.8-1.700 1.800v2.100c0 1.200 1.300 2 3.500 2z" fill="#4aa3dd"/></svg><span style="left:195.500px">Main.py</span><svg style="left:225.0px;top:3.200px" width="7" height="7" viewBox="0 0 16 16"><path d="M5.500 2.500L11 8l-5.500 5.500" fill="none" stroke="#a9a9a9" stroke-width="1.500"/></svg><span style="left:233px">…</span></div><div class=abs style="left:186.500px;top:55.400px;width:1517.500px;height:1.500px;background:linear-gradient(#141414,#1f1f1f);z-index:3"></div><div class=ed style="left:186.500px;width:676px"><div class=ln style="top:6.09px"><span class=no style="left:-3.9px">4</span><span class=cd style="left:41.2px"><i class=c># Function to define structural objects</i></span></div>
<div class=ln style="top:17.51px"><span class=no style="left:-3.9px">5</span><span class=cd style="left:41.2px"><i class=k>def</i> <i class=f>define_structure</i><i class=b1>(</i><i class=b1>)</i> -&gt; <i class=t>list</i>:</span></div>
<div class=ln style="top:28.93px"><span class=no style="left:-3.9px">6</span><span class=cd style="left:41.2px">    <i class=s>"""Define and return a list of structural objects."""</i></span></div>
<div class=ln style="top:40.35px"><span class=no style="left:-3.9px">7</span><span class=cd style="left:41.2px"></span></div>
<div class=ln style="top:51.77px"><span class=no style="left:-3.9px">8</span><span class=cd style="left:41.2px">    <i class=v>inf</i> = <i class=t>float</i><i class=b1>(</i><i class=s>'inf'</i><i class=b1>)</i></span></div>
<div class=ln style="top:63.19px"><span class=no style="left:-3.9px">9</span><span class=cd style="left:41.2px"></span></div>
<div class=ln style="top:74.61px"><span class=no style="left:-3.9px">10</span><span class=cd style="left:41.2px">    <i class=r>return</i> <i class=b1>[</i></span></div>
<div class=ln style="top:86.03px"><span class=no style="left:-3.9px">11</span><span class=cd style="left:41.2px">        <i class=c># Define material</i></span></div>
<div class=ln style="top:97.45px"><span class=no style="left:-3.9px">12</span><span class=cd style="left:41.2px">        <i class=t>rfem</i>.structure_core.Material<i class=b2>(</i></span></div>
<div class=ln style="top:108.87px"><span class=no style="left:-3.9px">13</span><span class=cd style="left:41.2px">            <i class=v>no</i>=<i class=n>1</i>,</span></div>
<div class=ln style="top:120.29px"><span class=no style="left:-3.9px">14</span><span class=cd style="left:41.2px">            <i class=v>name</i>=<i class=s>'S235'</i></span></div>
<div class=ln style="top:131.71px"><span class=no style="left:-3.9px">15</span><span class=cd style="left:41.2px">        <i class=b2>)</i>,</span></div>
<div class=ln style="top:143.13px"><span class=no style="left:-3.9px">16</span><span class=cd style="left:41.2px"></span></div>
<div class=ln style="top:154.55px"><span class=no style="left:-3.9px">17</span><span class=cd style="left:41.2px">        <i class=c># Define section</i></span></div>
<div class=ln style="top:165.97px"><span class=no style="left:-3.9px">18</span><span class=cd style="left:41.2px">        <i class=t>rfem</i>.structure_core.Section<i class=b2>(</i></span></div>
<div class=ln style="top:177.39px"><span class=no style="left:-3.9px">19</span><span class=cd style="left:41.2px">            <i class=v>no</i>=<i class=n>1</i>,</span></div>
<div class=ln style="top:188.81px"><span class=no style="left:-3.9px">20</span><span class=cd style="left:41.2px">            <i class=v>name</i>=<i class=s>'HE 300 A'</i>,</span></div>
<div class=ln style="top:200.23px"><span class=no style="left:-3.9px">21</span><span class=cd style="left:41.2px">            <i class=v>material</i>=<i class=n>1</i></span></div>
<div class=ln style="top:211.65px"><span class=no style="left:-3.9px">22</span><span class=cd style="left:41.2px">        <i class=b2>)</i>,</span></div>
<div class=ln style="top:223.07px"><span class=no style="left:-3.9px">23</span><span class=cd style="left:41.2px"></span></div>
<div class=ln style="top:234.49px"><span class=no style="left:-3.9px">24</span><span class=cd style="left:41.2px">        <i class=c># Define nodes</i></span></div>
<div class=ln style="top:245.91px"><span class=no style="left:-3.9px">25</span><span class=cd style="left:41.2px">        <i class=t>rfem</i>.structure_core.Node<i class=b2>(</i><i class=v>no</i>=<i class=n>1</i><i class=b2>)</i>,</span></div>
<div class=ln style="top:257.33px"><span class=no style="left:-3.9px">26</span><span class=cd style="left:41.2px">        <i class=t>rfem</i>.structure_core.Node<i class=b2>(</i><i class=v>no</i>=<i class=n>2</i>, <i class=v>coordinate_1</i>=<i class=n>6.0</i><i class=b2>)</i>,</span></div>
<div class=ln style="top:268.75px"><span class=no style="left:-3.9px">27</span><span class=cd style="left:41.2px"></span></div>
<div class=ln style="top:280.17px"><span class=no style="left:-3.9px">28</span><span class=cd style="left:41.2px">        <i class=c># Define line</i></span></div>
<div class=ln style="top:291.59px"><span class=no style="left:-3.9px">29</span><span class=cd style="left:41.2px">        <i class=t>rfem</i>.structure_core.Line<i class=b2>(</i></span></div>
<div class=ln style="top:303.01px"><span class=no style="left:-3.9px">30</span><span class=cd style="left:41.2px">            <i class=v>no</i>=<i class=n>1</i>,</span></div>
<div class=ln style="top:314.43px"><span class=no style="left:-3.9px">31</span><span class=cd style="left:41.2px">            <i class=v>definition_nodes</i>=<i class=b3>[</i><i class=n>1</i>, <i class=n>2</i><i class=b3>]</i></span></div>
<div class=ln style="top:325.85px"><span class=no style="left:-3.9px">32</span><span class=cd style="left:41.2px">        <i class=b2>)</i>,</span></div>
<div class=ln style="top:337.27px"><span class=no style="left:-3.9px">33</span><span class=cd style="left:41.2px"></span></div>
<div class=ln style="top:348.69px"><span class=no style="left:-3.9px">34</span><span class=cd style="left:41.2px">        <i class=c># Define member</i></span></div>
<div class=ln style="top:360.11px"><span class=no style="left:-3.9px">35</span><span class=cd style="left:41.2px">        <i class=t>rfem</i>.structure_core.Member<i class=b2>(</i></span></div>
<div class=ln style="top:371.53px"><span class=no style="left:-3.9px">36</span><span class=cd style="left:41.2px">            <i class=v>no</i>=<i class=n>1</i>,</span></div>
<div class=ln style="top:382.95px"><span class=no style="left:-3.9px">37</span><span class=cd style="left:41.2px">            <i class=v>line</i>=<i class=n>1</i>,</span></div>
<div class=ln style="top:394.37px"><span class=no style="left:-3.9px">38</span><span class=cd style="left:41.2px">            <i class=v>section_start</i>=<i class=n>1</i></span></div>
<div class=ln style="top:405.79px"><span class=no style="left:-3.9px">39</span><span class=cd style="left:41.2px">        <i class=b2>)</i>,</span></div>
<div class=ln style="top:417.21px"><span class=no style="left:-3.9px">40</span><span class=cd style="left:41.2px"></span></div>
<div class=ln style="top:428.63px"><span class=no style="left:-3.9px">41</span><span class=cd style="left:41.2px">        <i class=c># Define nodal support at Node 1 (fully fixed)</i></span></div>
<div class=ln style="top:440.05px"><span class=no style="left:-3.9px">42</span><span class=cd style="left:41.2px">        <i class=t>rfem</i>.types_for_nodes.NodalSupport<i class=b2>(</i></span></div>
<div class=ln style="top:451.47px"><span class=no style="left:-3.9px">43</span><span class=cd style="left:41.2px">            <i class=v>no</i>=<i class=n>1</i>,</span></div>
<div class=ln style="top:462.89px"><span class=no style="left:-3.9px">44</span><span class=cd style="left:41.2px">            <i class=v>nodes</i>=<i class=b3>[</i><i class=n>1</i><i class=b3>]</i>,</span></div>
<div class=ln style="top:474.31px"><span class=no style="left:-3.9px">45</span><span class=cd style="left:41.2px">            <i class=v>spring_x</i>=<i class=v>inf</i>, <i class=v>spring_y</i>=<i class=v>inf</i>, <i class=v>spring_z</i>=<i class=v>inf</i>,</span></div>
<div class=ln style="top:485.73px"><span class=no style="left:-3.9px">46</span><span class=cd style="left:41.2px">            <i class=v>rotational_restraint_x</i>=<i class=v>inf</i>,</span></div>
<div class=ln style="top:497.15px"><span class=no style="left:-3.9px">47</span><span class=cd style="left:41.2px">            <i class=v>rotational_restraint_y</i>=<i class=v>inf</i>,</span></div>
<div class=ln style="top:508.57px"><span class=no style="left:-3.9px">48</span><span class=cd style="left:41.2px">            <i class=v>rotational_restraint_z</i>=<i class=v>inf</i></span></div>
<div class=ln style="top:519.99px"><span class=no style="left:-3.9px">49</span><span class=cd style="left:41.2px">        <i class=b2>)</i>,</span></div>
<div class=ln style="top:531.41px"><span class=no style="left:-3.9px">50</span><span class=cd style="left:41.2px">    <i class=b1>]</i></span></div>
<div class=ln style="top:542.83px"><span class=no style="left:-3.9px">51</span><span class=cd style="left:41.2px"></span></div>
<div class=ln style="top:554.25px"><span class=no style="left:-3.9px">52</span><span class=cd style="left:41.2px"></span></div>
<div class=ln style="top:565.67px"><span class=no style="left:-3.9px">53</span><span class=cd style="left:41.2px"><i class=c># Function to define loading objects</i></span></div>
<div class=ln style="top:577.09px"><span class=no style="left:-3.9px">54</span><span class=cd style="left:41.2px"><i class=k>def</i> <i class=f>define_loading</i><i class=b1>(</i><i class=b1>)</i> -&gt; <i class=t>list</i>:</span></div>
<div class=ln style="top:588.51px"><span class=no style="left:-3.9px">55</span><span class=cd style="left:41.2px">    <i class=s>"""Define and return a list of loading objects."""</i></span></div>
<div class=ln style="top:599.93px"><span class=no style="left:-3.9px">56</span><span class=cd style="left:41.2px"></span></div>
<div class=ln style="top:611.35px"><span class=no style="left:-3.9px">57</span><span class=cd style="left:41.2px">    <i class=r>return</i> <i class=b1>[</i></span></div>
<div class=ln style="top:622.77px"><span class=no style="left:-3.9px">58</span><span class=cd style="left:41.2px">        <i class=c># Static analysis settings</i></span></div>
<div class=ln style="top:634.19px"><span class=no style="left:-3.9px">59</span><span class=cd style="left:41.2px">        <i class=t>rfem</i>.loading.StaticAnalysisSettings<i class=b2>(</i></span></div>
<div class=ln style="top:645.61px"><span class=no style="left:-3.9px">60</span><span class=cd style="left:41.2px">            <i class=v>no</i>=<i class=n>1</i>,</span></div>
<div class=ln style="top:657.03px"><span class=no style="left:-3.9px">61</span><span class=cd style="left:41.2px">            <i class=v>analysis_type</i>=<i class=t>rfem</i>.loading.StaticAnalysisSettingsAnalysisType.</span></div>
<div class=ln style="top:668.45px"><span class=no style="left:-3.9px">62</span><span class=cd style="left:41.2px">            STATIC_ANALYSIS_SETTINGS_ANALYSIS_TYPE_GEOMETRICALLY_LINEAR</span></div>
<div class=ln style="top:679.87px"><span class=no style="left:-3.9px">63</span><span class=cd style="left:41.2px">        <i class=b2>)</i>,</span></div>
<div class=ln style="top:691.29px"><span class=no style="left:-3.9px">64</span><span class=cd style="left:41.2px"></span></div>
<div class=ln style="top:702.71px"><span class=no style="left:-3.9px">65</span><span class=cd style="left:41.2px">        <i class=c># Define load cases</i></span></div>
<div class=ln style="top:714.13px"><span class=no style="left:-3.9px">66</span><span class=cd style="left:41.2px">        <i class=t>rfem</i>.loading.LoadCase<i class=b2>(</i><i class=v>no</i>=<i class=n>1</i>, <i class=v>static_analysis_settings</i>=<i class=n>1</i><i class=b2>)</i>,</span></div>
<div class=ln style="top:725.55px"><span class=no style="left:-3.9px">67</span><span class=cd style="left:41.2px">        <i class=t>rfem</i>.loading.LoadCase<i class=b2>(</i><i class=v>no</i>=<i class=n>2</i>, <i class=v>static_analysis_settings</i>=<i class=n>1</i><i class=b2>)</i>,</span></div>
<div class=ln style="top:736.97px"><span class=no style="left:-3.9px">68</span><span class=cd style="left:41.2px"></span></div>
<div class=ln style="top:748.39px"><span class=no style="left:-3.9px">69</span><span class=cd style="left:41.2px">        <i class=c># Define nodal loads</i></span></div>
<div class=ln style="top:759.81px"><span class=no style="left:-3.9px">70</span><span class=cd style="left:41.2px">        <i class=t>rfem</i>.loads.NodalLoad<i class=b2>(</i></span></div><div class=ig style="left:41.2px;top:26.9px;height:513.9px"></div><div class=ig style="left:59.7px;top:84.0px;height:445.4px"></div><div class=ig style="left:78.2px;top:106.9px;height:22.8px"></div><div class=ig style="left:78.2px;top:175.4px;height:34.3px"></div><div class=ig style="left:78.2px;top:301.0px;height:22.8px"></div><div class=ig style="left:78.2px;top:369.5px;height:34.3px"></div><div class=ig style="left:78.2px;top:449.5px;height:68.5px"></div><div class=ig style="left:41.2px;top:586.5px;height:194.1px"></div><div class=ig style="left:59.7px;top:620.8px;height:159.9px"></div><div class=ig style="left:78.2px;top:643.6px;height:34.3px"></div><div class=abs style="left:0;top:49.8px;width:1px;height:12px;background:#0078d4"></div><div class=abs style="left:667.900px;top:0;width:1px;height:770px;background:#292929"></div><div class=abs style="left:673.200px;top:4.600px;width:2.300px;height:4px;background:#e8c000"></div></div><div class=ed style="left:863px;width:841px"><div class=ln style="top:1.49px"><span class=no style="left:-5.4px">8</span><span class=cd style="left:39.9px">    <i class=c># Close all models opened in application without saving</i></span></div>
<div class=ln style="top:12.91px"><span class=no style="left:-5.4px">9</span><span class=cd style="left:39.9px">    <i class=v>rfem_app</i>.close_all_models<i class=b1>(</i><i class=v>save_changes</i>=<i class=k>False</i><i class=b1>)</i></span></div>
<div class=ln style="top:24.33px"><span class=no style="left:-5.4px">10</span><span class=cd style="left:39.9px">    <i class=c># Create new model named 'silo' and get its ID.</i></span></div>
<div class=ln style="top:35.75px"><span class=no style="left:-5.4px">11</span><span class=cd style="left:39.9px">    <i class=v>silo_id</i> = <i class=t>common</i>.ModelId<i class=b1>(</i><i class=v>id</i>=<i class=v>rfem_app</i>.create_model<i class=b2>(</i><i class=v>name</i>=<i class=s>'silo'</i><i class=b2>)</i>.id<i class=b1>)</i></span></div>
<div class=ln style="top:47.17px"><span class=no style="left:-5.4px">12</span><span class=cd style="left:39.9px">    <i class=c># Create new model named 'steel_hall' and get its ID.</i></span></div>
<div class=ln style="top:58.59px"><span class=no style="left:-5.4px">13</span><span class=cd style="left:39.9px">    <i class=v>steel_hall_id</i> = <i class=t>common</i>.ModelId<i class=b1>(</i><i class=v>id</i>=<i class=v>rfem_app</i>.create_model<i class=b2>(</i><i class=v>name</i>=<i class=s>'steel_hall'</i><i class=b2>)</i>.id<i class=b1>)</i></span></div>
<div class=ln style="top:70.01px"><span class=no style="left:-5.4px">14</span><span class=cd style="left:39.9px"></span></div>
<div class=ln style="top:81.43px"><span class=no style="left:-5.4px">15</span><span class=cd style="left:39.9px">    <i class=c># Cleanup both models</i></span></div>
<div class=ln style="top:92.85px"><span class=no style="left:-5.4px">16</span><span class=cd style="left:39.9px">    <i class=v>rfem_app</i>.delete_all_objects<i class=b1>(</i><i class=v>id</i>=<i class=v>silo_id</i>.id<i class=b1>)</i></span></div>
<div class=ln style="top:104.27px"><span class=no style="left:-5.4px">17</span><span class=cd style="left:39.9px">    <i class=v>rfem_app</i>.delete_all_objects<i class=b1>(</i><i class=v>id</i>=<i class=v>steel_hall_id</i>.id<i class=b1>)</i></span></div>
<div class=ln style="top:115.69px"><span class=no style="left:-5.4px">18</span><span class=cd style="left:39.9px"></span></div><div class=ln style="top:686.69px"><span class=no style="left:-5.4px">68</span><span class=cd style="left:39.9px">        <i class=t>rfem</i>.structure_core.Node<i class=b2>(</i><i class=v>no</i>=<i class=n>11</i>, <i class=v>coordinate_1</i>=<i class=n>0.0</i>, <i class=v>coordinate_2</i>=<i class=n>5.0</i>, <i class=v>coordinate_3</i>=-<i class=n>2.5</i><i class=b2>)</i>,</span></div>
<div class=ln style="top:698.11px"><span class=no style="left:-5.4px">69</span><span class=cd style="left:39.9px">        <i class=t>rfem</i>.structure_core.Node<i class=b2>(</i><i class=v>no</i>=<i class=n>12</i>, <i class=v>coordinate_1</i>=<i class=n>0.0</i>, <i class=v>coordinate_2</i>=<i class=n>5.0</i>, <i class=v>coordinate_3</i>=-<i class=n>3.0</i><i class=b2>)</i>,</span></div>
<div class=ln style="top:709.53px"><span class=no style="left:-5.4px">70</span><span class=cd style="left:39.9px">        <i class=t>rfem</i>.structure_core.Node<i class=b2>(</i><i class=v>no</i>=<i class=n>13</i>, <i class=v>coordinate_1</i>=<i class=n>6.0</i>, <i class=v>coordinate_2</i>=<i class=n>5.0</i>, <i class=v>coordinate_3</i>=-<i class=n>4.5</i><i class=b2>)</i>,</span></div>
<div class=ln style="top:720.95px"><span class=no style="left:-5.4px">71</span><span class=cd style="left:39.9px">        <i class=t>rfem</i>.structure_core.Node<i class=b2>(</i><i class=v>no</i>=<i class=n>14</i>, <i class=v>coordinate_1</i>=<i class=n>12.0</i>, <i class=v>coordinate_2</i>=<i class=n>5.0</i>, <i class=v>coordinate_3</i>=-<i class=n>3.0</i><i class=b2>)</i>,</span></div>
<div class=ln style="top:732.37px"><span class=no style="left:-5.4px">72</span><span class=cd style="left:39.9px">        <i class=t>rfem</i>.structure_core.Node<i class=b2>(</i><i class=v>no</i>=<i class=n>15</i>, <i class=v>coordinate_1</i>=<i class=n>12.0</i>, <i class=v>coordinate_2</i>=<i class=n>5.0</i>, <i class=v>coordinate_3</i>=-<i class=n>2.5</i><i class=b2>)</i>,</span></div>
<div class=ln style="top:743.79px"><span class=no style="left:-5.4px">73</span><span class=cd style="left:39.9px">        <i class=t>rfem</i>.structure_core.Node<i class=b2>(</i><i class=v>no</i>=<i class=n>16</i>, <i class=v>coordinate_1</i>=<i class=n>12.0</i>, <i class=v>coordinate_2</i>=<i class=n>5.0</i>, <i class=v>coordinate_3</i>=<i class=n>0.0</i><i class=b2>)</i>,</span></div>
<div class=ln style="top:755.21px"><span class=no style="left:-5.4px">74</span><span class=cd style="left:39.9px">        <i class=t>rfem</i>.structure_core.Node<i class=b2>(</i><i class=v>no</i>=<i class=n>17</i>, <i class=v>coordinate_1</i>=<i class=n>0.3</i>, <i class=v>coordinate_2</i>=<i class=n>5.0</i>, <i class=v>coordinate_3</i>=-<i class=n>2.5</i><i class=b2>)</i>,</span></div>
<div class=ln style="top:766.63px"><span class=no style="left:-5.4px">75</span><span class=cd style="left:39.9px">        <i class=t>rfem</i>.structure_core.Node<i class=b2>(</i><i class=v>no</i>=<i class=n>18</i>, <i class=v>coordinate_1</i>=<i class=n>0.3</i>, <i class=v>coordinate_2</i>=<i class=n>5.0</i>, <i class=v>coordinate_3</i>=-<i class=n>4.5</i><i class=b2>)</i>,</span></div><div class=abs style="left:27.100px;top:0;width:2.100px;height:770px;background:#0f7bd0"></div><div class=ig style="left:40.200px;top:0;height:770px"></div><div class=ig style="left:58.7px;top:680px;height:90px"></div><div class=abs style="left:835.300px;top:0;width:2.700px;height:770px;background:#1b6fc0"></div><div class=abs style="left:834.500px;top:11px;width:6.500px;height:96px;background:rgba(121,121,121,.45)"></div><div class=abs style="left:839.500px;top:1.500px;width:1.500px;height:3px;background:#cca700"></div><div class=abs style="left:835.300px;top:669.500px;width:2.700px;height:2.500px;background:#e05050"></div></div><div id=status><div class=abs style="left:0;top:0;width:20px;height:12px;background:#0078d4"></div><svg class=abs style="left:5.500px;top:2px" width="9" height="8.500" viewBox="0 0 16 16"><path d="M2 4l4 4-4 4M14 4l-4 4 4 4" fill="none" stroke="#ffffff" stroke-width="1.500" transform="translate(0,0) skewX(-18) translate(2.500,0)"/></svg><svg class=abs style="left:23.0px;top:2px" width="8.5" height="8.500" viewBox="0 0 16 16"><circle cx="5" cy="3.500" r="1.600" fill="none" stroke="#cccccc" stroke-width="1.300"/><circle cx="5" cy="12.500" r="1.600" fill="none" stroke="#cccccc" stroke-width="1.300"/><circle cx="11.500" cy="5.500" r="1.600" fill="none" stroke="#cccccc" stroke-width="1.300"/><path d="M5 5v6M11.500 7c0 3-6.500 1.500-6.500 4" fill="none" stroke="#cccccc" stroke-width="1.300"/></svg><span class=sb style="left:34.0px">main*</span><svg class=abs style="left:56.0px;top:2px" width="8.5" height="8.500" viewBox="0 0 16 16"><path d="M3 8a5 5 0 0 1 9-3M13 8a5 5 0 0 1-9 3M12.500 2v3.500H9M3.500 14v-3.500H7" fill="none" stroke="#cccccc" stroke-width="1.300"/></svg><svg class=abs style="left:72.5px;top:2px" width="8.5" height="8.500" viewBox="0 0 16 16"><circle cx="4" cy="3.500" r="1.500" fill="none" stroke="#cccccc" stroke-width="1.300"/><circle cx="4" cy="12.500" r="1.500" fill="none" stroke="#cccccc" stroke-width="1.300"/><path d="M4 5v6M7 4h3c2 0 3 1 3 3v2M10.500 11.500l2.500 2.500 2.500-2.500M9 9l2-2" fill="none" stroke="#cccccc" stroke-width="1.300"/></svg><svg class=abs style="left:89.0px;top:2px" width="8.5" height="8.500" viewBox="0 0 16 16"><path d="M9 2c3-1 5 0 5 0s1 2 0 5l-4 4-4-4zM6 7l-3 1 2 2M10 11l-1 3-2-2M3 13l2-2" fill="none" stroke="#cccccc" stroke-width="1.300"/></svg><svg class=abs style="left:99.0px;top:2px" width="8.5" height="8.500" viewBox="0 0 16 16"><path d="M7 9a3 3 0 0 0 4 0l2.500-2.500a3 3 0 0 0-4-4L8.500 3.500M9 7a3 3 0 0 0-4 0L2.500 9.500a3 3 0 0 0 4 4L7.500 12.500" fill="none" stroke="#cccccc" stroke-width="1.300"/></svg><span class=sb style="left:110.0px">Launchpad</span><svg class=abs style="left:153.5px;top:2px" width="8.5" height="8.500" viewBox="0 0 16 16"><circle cx="8" cy="8" r="6" fill="none" stroke="#cccccc" stroke-width="1.300"/><path d="M5.500 5.500l5 5M10.500 5.500l-5 5" fill="none" stroke="#cccccc" stroke-width="1.300"/></svg><span class=sb style="left:163.5px">0</span><svg class=abs style="left:170.0px;top:2px" width="8.5" height="8.500" viewBox="0 0 16 16"><path d="M8 2L14.500 13.500h-13zM8 6.500v3.500M8 11.300v1" fill="none" stroke="#cccccc" stroke-width="1.300"/></svg><span class=sb style="left:180.0px">3</span><svg class=abs style="left:193.5px;top:2px" width="8.5" height="8.500" viewBox="0 0 16 16"><path d="M8 7v7M5 14l3-6 3 6M4.500 4a5 5 0 0 0 0 6M11.500 4a5 5 0 0 1 0 6" fill="none" stroke="#cccccc" stroke-width="1.300"/><circle cx="8" cy="7" r="1" fill="#cccccc"/></svg><span class=sb style="left:204.0px">0</span><svg class=abs style="left:1355.5px;top:2px" width="8.5" height="8.500" viewBox="0 0 16 16"><path d="M8 14L2 9.500l1.500-6 1.800 4h5.400l1.800-4 1.500 6z" fill="none" stroke="#cccccc" stroke-width="1.300"/></svg><span class=sb style="left:1367.0px">Rose...</span><span class=sb style="left:1432.0px">Ln 86, Col 36</span><span class=sb style="left:1483.0px">Spaces: 4</span><span class=sb style="left:1521.0px">UTF-8</span><span class=sb style="left:1550.0px">CRLF</span><span class=sb style="left:1575.0px">{ }</span><span class=sb style="left:1586.5px">Python</span><span class=sb style="left:1617.0px">3.12.4</span><svg class=abs style="left:1645.0px;top:2px" width="8.5" height="8.500" viewBox="0 0 16 16"><circle cx="8" cy="8" r="6" fill="none" stroke="#cccccc" stroke-width="1.300"/><path d="M4 12L12 4" fill="none" stroke="#cccccc" stroke-width="1.300"/></svg><span class=sb style="left:1656.0px">Prettier</span><svg class=abs style="left:1689.0px;top:2px" width="8.5" height="8.500" viewBox="0 0 16 16"><path d="M8 2c-2.500 0-4 2-4 4v3l-1.500 2.500h11L12 9V6c0-2-1.500-4-4-4zM6.500 13.500a1.500 1.500 0 0 0 3 0" fill="none" stroke="#cccccc" stroke-width="1.300"/></svg></div><div id=rf><div class=a style="left:0;top:0;width:835px;height:12.600px;background:linear-gradient(90deg,#f1f3f9,#eef1f8)"></div><svg class=a style="left:3px;top:2.200px" width="8" height="8" viewBox="0 0 16 16"><circle cx="7" cy="9" r="6" fill="#d9a520"/><circle cx="7" cy="9" r="3" fill="#1d4f9a"/><path d="M8 2l6-1-2 5z" fill="#3b6fc0"/></svg><span class=a style="left:12.6px;top:2.9px;line-height:7px;font-size:5.200px;color:#2a2a2a;letter-spacing:-.05px">Dlubal RFEM | 6.08.0011 | Concrete_and_Steel_Structure.rf6*</span><div class=a style="left:779px;top:6.300px;width:4.500px;height:.6px;background:#333"></div><div class=a style="left:800px;top:4.300px;width:4.600px;height:4.600px;border:.7px solid #333;border-radius:.6px"></div><svg class=a style="left:821px;top:4px" width="5.400" height="5.400" viewBox="0 0 10 10"><path d="M1 1l8 8M9 1L1 9" stroke="#222" stroke-width="1.200"/></svg><div class=a style="left:0;top:12.600px;width:835px;height:9.400px;background:#f6f7f9"></div><div class=a style="left:1px;top:14.500px;width:7px;height:5.500px;background:#1d3e8a"></div><div class=a style="left:1px;top:17px;width:7px;height:.8px;background:#fff"></div><span class=a style="left:10.0px;top:13.9px;line-height:7px;font-size:4.650px;color:#2a2a2a">File</span><span class=a style="left:22.8px;top:13.9px;line-height:7px;font-size:4.650px;color:#2a2a2a">Edit</span><span class=a style="left:36.4px;top:13.9px;line-height:7px;font-size:4.650px;color:#2a2a2a">View</span><span class=a style="left:51.7px;top:13.9px;line-height:7px;font-size:4.650px;color:#2a2a2a">Insert</span><span class=a style="left:69.0px;top:13.9px;line-height:7px;font-size:4.650px;color:#2a2a2a">Assign</span><span class=a style="left:88.5px;top:13.9px;line-height:7px;font-size:4.650px;color:#2a2a2a">Calculate</span><span class=a style="left:112.5px;top:13.9px;line-height:7px;font-size:4.650px;color:#2a2a2a">Results</span><span class=a style="left:133.0px;top:13.9px;line-height:7px;font-size:4.650px;color:#2a2a2a">Tools</span><span class=a style="left:150.0px;top:13.9px;line-height:7px;font-size:4.650px;color:#2a2a2a">Options</span><span class=a style="left:171.9px;top:13.9px;line-height:7px;font-size:4.650px;color:#2a2a2a">Window</span><span class=a style="left:194.4px;top:13.9px;line-height:7px;font-size:4.650px;color:#2a2a2a">CAD-BIM</span><span class=a style="left:218.8px;top:13.9px;line-height:7px;font-size:4.650px;color:#2a2a2a">Help</span><div class=a style="left:576px;top:13.600px;width:102px;height:7.400px;background:#e4e5f4"></div><span class=a style="left:572.5px;top:13.9px;line-height:7px;font-size:4px;color:#444">▸</span><span class=a style="left:577.5px;top:13.9px;line-height:7px;font-size:4.700px;color:#9a9aaa">Type a keyword (Alt+Q)</span><svg class=a style="left:681px;top:14px" width="7" height="6" viewBox="0 0 14 12"><path d="M1 11V3h9v8zM4 6h3M11 2l2-1" fill="none" stroke="#999" stroke-width="1"/></svg><span class=a style="left:691.0px;top:13.9px;line-height:7px;font-size:4.800px;color:#222;letter-spacing:-.04px">Online License 18 | Martin Motlík | Dlubal Software s.r.o.</span><div class=a style="left:812.500px;top:19px;width:3px;height:.7px;background:#222"></div><div class=a style="left:821.500px;top:15.500px;width:3.200px;height:3.200px;border:.6px solid #222"></div><svg class=a style="left:828.500px;top:15.200px" width="4" height="4" viewBox="0 0 10 10"><path d="M1 1l8 8M9 1L1 9" stroke="#111" stroke-width="1.800"/></svg><div class=a style="left:0;top:22px;width:835px;height:24.400px;background:#f8f8f8"></div><svg class=tbi style="left:5.6px;top:23.3px;overflow:visible" viewBox="0 0 10 10"><path d="M2.500 1.500h4l1.800 1.800V9h-5.800z" fill="#e1e1e1" stroke="#8b8f94" stroke-width=".7"/><path d="M4 4.500h3M4 6h3M4 7.500h3" stroke="#b5b5b5" stroke-width=".5"/><path d="M2.200 .4l.6 1.300 1.400.2-1 1 .2 1.400-1.200-.7-1.200.7.2-1.400-1-1 1.400-.2z" fill="#f2d21a" stroke="#b89a00" stroke-width=".25"/></svg><svg class=tbi style="left:17.0px;top:23.3px;overflow:visible" viewBox="0 0 10 10"><path d="M1 3.500h3l.8 1H9V9H1z" fill="#f1e08a" stroke="#c9b24f" stroke-width=".6"/><circle cx="7.200" cy="2.500" r="1.300" fill="#2fa43a"/></svg><svg class=tbi style="left:27.8px;top:23.3px;overflow:visible" viewBox="0 0 10 10"><circle cx="5" cy="5" r="4" fill="#19b5ea"/><path d="M5.800 2.800L3.600 5l2.200 2.200" fill="none" stroke="#fff" stroke-width="1.200"/></svg><svg class=tbi style="left:38.9px;top:23.3px;overflow:visible" viewBox="0 0 10 10"><rect x="1" y="1.500" width="5.500" height="5" rx="1" fill="#19b5ea"/><rect x="3.500" y="4" width="5.500" height="5" rx="1.500" fill="#49c4f0" stroke="#fff" stroke-width=".5"/></svg><svg class=tbi style="left:50.3px;top:23.3px;overflow:visible" viewBox="0 0 10 10"><path d="M1.200 3h6.600v6H1.200z" fill="#55595e"/><rect x="2.600" y="6" width="3.800" height="3" fill="#d5d5d5"/><path d="M5 .8h4v3H5z" fill="#f0a030"/><path d="M5.500 1.500l3 1.500" stroke="#3f78c5" stroke-width=".8"/></svg><svg class=tbi style="left:61.2px;top:23.3px;overflow:visible" viewBox="0 0 10 10"><path d="M1.200 1.200h6.600l1 1v6.600H1.200z" fill="#55595e"/><rect x="2.800" y="1.200" width="4" height="2.600" fill="#e8e8e8"/><rect x="2.600" y="5.600" width="4.800" height="3.200" fill="#d5d5d5"/></svg><svg class=tbi style="left:72.0px;top:23.3px;overflow:visible" viewBox="0 0 10 10"><rect x="2.500" y="1" width="5" height="2.500" fill="#e6e6e6" stroke="#55595e" stroke-width=".5"/><rect x="1" y="3.500" width="8" height="3.500" rx=".6" fill="#55595e"/><rect x="2.500" y="6" width="5" height="3" fill="#f0f0f0" stroke="#55595e" stroke-width=".5"/></svg><div class=dd style="left:82.9px;top:27.0px"></div><svg class=tbi style="left:88.9px;top:23.3px;overflow:visible" viewBox="0 0 10 10"><path d="M2.500 1.500h4l1.800 1.800V9h-5.800z" fill="#e1e1e1" stroke="#8b8f94" stroke-width=".7"/><path d="M4 4.500h3M4 6h3M4 7.500h3" stroke="#b5b5b5" stroke-width=".5"/><path d="M2.200 .4l.6 1.300 1.400.2-1 1 .2 1.400-1.200-.7-1.200.7.2-1.400-1-1 1.400-.2z" fill="#f2d21a" stroke="#b89a00" stroke-width=".25"/></svg><svg class=tbi style="left:100.3px;top:23.3px;overflow:visible" viewBox="0 0 10 10"><path d="M2.500 1.500h4l1.800 1.800V9h-5.800z" fill="#e1e1e1" stroke="#8b8f94" stroke-width=".7"/><path d="M4 4.500h3M4 6h3M4 7.500h3" stroke="#b5b5b5" stroke-width=".5"/></svg><div class=sep style="left:113.6px;top:23.3px"></div><svg class=tbi style="left:113.4px;top:23.3px;overflow:visible" viewBox="0 0 10 10"><g><path d="M2 6c1-3 5-3.500 6.500 0" fill="none" stroke="#8b8f94" stroke-width="1"/><path d="M1 3.800L2 6.500l2.500-1" fill="none" stroke="#8b8f94" stroke-width="1"/></g></svg><div class=dd style="left:124.0px;top:27.0px"></div><svg class=tbi style="left:130.5px;top:23.3px;overflow:visible" viewBox="0 0 10 10"><g transform="translate(10,0) scale(-1,1)"><path d="M2 6c1-3 5-3.500 6.500 0" fill="none" stroke="#8b8f94" stroke-width="1"/><path d="M1 3.800L2 6.500l2.500-1" fill="none" stroke="#8b8f94" stroke-width="1"/></g></svg><div class=dd style="left:140.9px;top:27.0px"></div><div class=sep style="left:147.7px;top:23.3px"></div><svg class=tbi style="left:150.0px;top:23.3px;overflow:visible" viewBox="0 0 10 10"><rect x="-.6" y="-1.200" width="11.200" height="12.400" fill="#cfe4f9" stroke="#9cc6ee" stroke-width=".4"/><rect x="1.500" y="1" width="7" height="8" fill="#eef2f8" stroke="#8b8f94" stroke-width=".7"/><rect x="1.500" y="1" width="7" height="2" fill="#3f78c5"/><path d="M4 3v6" stroke="#8b8f94" stroke-width=".6"/></svg><svg class=tbi style="left:160.8px;top:23.3px;overflow:visible" viewBox="0 0 10 10"><rect x="1" y="1.500" width="8" height="7" fill="#eef2f8" stroke="#8b8f94" stroke-width=".7"/><rect x="1" y="1.500" width="8" height="1.800" fill="#3f78c5"/><path d="M1 5h8M1 7h8" stroke="#c5c9d0" stroke-width=".5"/></svg><svg class=tbi style="left:171.7px;top:23.3px;overflow:visible" viewBox="0 0 10 10"><path d="M1 6h8M1.500 2v7M8 2.500L6 5" fill="none" stroke="#7fb2e8" stroke-width=".8"/></svg><svg class=tbi style="left:183.0px;top:23.3px;overflow:visible" viewBox="0 0 10 10"><rect x="2" y="2" width="6" height="6" fill="#e4e4e4" stroke="#8b8f94" stroke-width=".8"/><path d="M3.500 5h3" stroke="#8b8f94" stroke-width=".7"/></svg><svg class=tbi style="left:193.6px;top:23.3px;overflow:visible" viewBox="0 0 10 10"><rect x="1" y="1.500" width="8" height="7" fill="#eef2f8" stroke="#8b8f94" stroke-width=".7"/><rect x="1" y="1.500" width="8" height="1.800" fill="#3f78c5"/><path d="M1 5h8M1 7h8" stroke="#c5c9d0" stroke-width=".5"/></svg><svg class=tbi style="left:205.0px;top:23.3px;overflow:visible" viewBox="0 0 10 10"><path d="M1.200 1.200h6.600l1 1v6.600H1.200z" fill="#55595e"/><rect x="2.800" y="1.200" width="4" height="2.600" fill="#e8e8e8"/><rect x="2.600" y="5.600" width="4.800" height="3.200" fill="#d5d5d5"/></svg><svg class=tbi style="left:215.8px;top:23.3px;overflow:visible" viewBox="0 0 10 10"><rect x="1.500" y="1" width="7" height="8" fill="#eef2f8" stroke="#8b8f94" stroke-width=".7"/><rect x="1.500" y="1" width="7" height="2" fill="#3f78c5"/><path d="M4 3v6" stroke="#8b8f94" stroke-width=".6"/></svg><svg class=tbi style="left:226.9px;top:23.3px;overflow:visible" viewBox="0 0 10 10"><path d="M5 1.500L8.500 8h-7z" fill="#ececec" stroke="#8b8f94" stroke-width=".7"/></svg><div class=sep style="left:238.5px;top:23.3px"></div><svg class=tbi style="left:242.8px;top:23.3px;overflow:visible" viewBox="0 0 10 10"><path d="M2 2h6L3 8h6" fill="none" stroke="#f2d21a" stroke-width="1.300"/><path d="M1.500 8.500L8.500 1.500" stroke="#d8262c" stroke-width=".8"/><path d="M6 8.500h3" stroke="#2fa43a" stroke-width="1"/></svg><div class=dd style="left:253.2px;top:27.0px"></div><svg class=tbi style="left:259.2px;top:23.3px;overflow:visible" viewBox="0 0 10 10"><rect x="1" y="2" width="8" height="6" fill="#f2d21a" stroke="#8a7a10" stroke-width=".6"/><path d="M3 4h1.500v2H3zM5.500 4H7v2H5.500z" fill="#5a4e00"/></svg><div class=sep style="left:271.3px;top:23.3px"></div><svg class=tbi style="left:274.4px;top:23.3px;overflow:visible" viewBox="0 0 10 10"><path d="M1 2.500h3M5 2h3.500v4" fill="none" stroke="#3f78c5" stroke-width="1"/><path d="M1 5h4" stroke="#f2d21a" stroke-width="1"/><path d="M1.500 7.500h3" stroke="#2fa43a" stroke-width="1"/><path d="M5.500 7.500h3" stroke="#d020d0" stroke-width="1"/></svg><svg class=tbi style="left:285.7px;top:23.3px;overflow:visible" viewBox="0 0 10 10"><path d="M1 2.500h3M5 2h3.500v4" fill="none" stroke="#3f78c5" stroke-width="1"/><path d="M1 5h4" stroke="#f2d21a" stroke-width="1"/><path d="M1.500 7.500h3" stroke="#2fa43a" stroke-width="1"/><path d="M5.500 7.500h3" stroke="#d020d0" stroke-width="1"/></svg><div class=a style="left:297.800px;top:23.500px;width:14px;height:7.500px;background:#d9534f"></div><span class=a style="left:299.5px;top:24.1px;line-height:7px;font-size:4.200px;color:#f5d0d0">ULS</span><div class=a style="left:312.500px;top:23.500px;width:27px;height:7.500px;background:#eceef6"></div><span class=a style="left:314.0px;top:24.1px;line-height:7px;font-size:4.600px;color:#111">DS1</span><div class=a style="left:340.500px;top:23.500px;width:75px;height:7.500px;background:#f0f1f7"></div><span class=a style="left:342.5px;top:24.1px;line-height:7px;font-size:4.600px;color:#111">ULS (STR/GEO) - Permanent a...</span><svg class=a style="left:408.500px;top:25.500px" width="4.500" height="4" viewBox="0 0 10 8"><path d="M1 2l4 4 4-4" fill="none" stroke="#333" stroke-width="1.300"/></svg><span class=a style="left:419.2px;top:24.1px;line-height:7px;font-size:5px;color:#111">◂</span><span class=a style="left:426.2px;top:24.1px;line-height:7px;font-size:5px;color:#111">▸</span><svg class=tbi style="left:433.2px;top:23.3px;overflow:visible" viewBox="0 0 10 10"><path d="M1 2h6L5 5v4L3.500 8V5z" fill="#3f78c5"/><path d="M5.500 1l3.500 3.500M9 1L5.500 4.500" stroke="#d8262c" stroke-width="1"/></svg><div class=dd style="left:443.1px;top:27.0px"></div><svg class=tbi style="left:448.9px;top:23.3px;overflow:visible" viewBox="0 0 10 10"><path d="M1.500 7.500c2-5 3-5 3.500-1s2 2 3.500-3" fill="none" stroke="#8b8f94" stroke-width=".8"/></svg><svg class=tbi style="left:460.2px;top:23.3px;overflow:visible" viewBox="0 0 10 10"><path d="M1.500 8l7-5M1.500 5.500l5-3.500" fill="none" stroke="#8b8f94" stroke-width=".8"/></svg><svg class=tbi style="left:471.1px;top:23.3px;overflow:visible" viewBox="0 0 10 10"><rect x="-.6" y="-1.200" width="11.200" height="12.400" fill="#cfe4f9" stroke="#9cc6ee" stroke-width=".4"/><path d="M1.500 8.500V3M1.500 8.500h7" stroke="#8b8f94" stroke-width=".8" fill="none"/><path d="M3.500 5l2.500-2 2.500 2-2.500 1.500z" fill="#2c4f8f"/></svg><svg class=tbi style="left:482.4px;top:23.3px;overflow:visible" viewBox="0 0 10 10"><path d="M1.500 3h7M1.500 6.500h7M3 3v3.500M7 3v3.500" fill="none" stroke="#8b8f94" stroke-width=".8"/></svg><svg class=tbi style="left:493.3px;top:23.3px;overflow:visible" viewBox="0 0 10 10"><path d="M2 8V3l3-1.500L8 3v5z" fill="#dedede" stroke="#8b8f94" stroke-width=".7"/></svg><svg class=tbi style="left:504.4px;top:23.3px;overflow:visible" viewBox="0 0 10 10"><path d="M2 3.500l3-1.500 3 1.500v4L5 9 2 7.500z" fill="#7fb2e8" stroke="#3f78c5" stroke-width=".5"/><path d="M2 3.500L5 5l3-1.500M5 5v4" fill="none" stroke="#2c5fa5" stroke-width=".5"/></svg><div class=dd style="left:514.7px;top:27.0px"></div><svg class=tbi style="left:520.8px;top:23.3px;overflow:visible" viewBox="0 0 10 10"><path d="M1 7l4-2 4 .5" stroke="#3f78c5" stroke-width="1.200" fill="none"/><circle cx="6.500" cy="3.500" r="1.400" fill="#3f78c5"/><path d="M5 5l2.500-1" stroke="#d8262c" stroke-width=".8"/></svg><svg class=tbi style="left:532.4px;top:23.3px;overflow:visible" viewBox="0 0 10 10"><path d="M2 2.500h6M2 5h6M2 7.500h6" stroke="#8b8f94" stroke-width=".9" stroke-dasharray="1.800 .8"/></svg><div class=sep style="left:543.7px;top:23.3px"></div><svg class=tbi style="left:545.5px;top:23.3px;overflow:visible" viewBox="0 0 10 10"><path d="M1 7l4-2 4 .5" stroke="#3f78c5" stroke-width="1.200" fill="none"/><circle cx="6.500" cy="3.500" r="1.400" fill="#3f78c5"/><path d="M5 5l2.500-1" stroke="#d8262c" stroke-width=".8"/></svg><svg class=tbi style="left:556.9px;top:23.3px;overflow:visible" viewBox="0 0 10 10"><path d="M1 3v6M9 3v6M1 5h8M1 7.500h8" stroke="#444" stroke-width=".8" fill="none"/><rect x="2" y="5.300" width="6" height="2" fill="#f2d21a"/></svg><div class=dd style="left:567.2px;top:27.0px"></div><div class=sep style="left:575.2px;top:23.3px"></div><svg class=tbi style="left:577.5px;top:23.3px;overflow:visible" viewBox="0 0 10 10"><circle cx="4" cy="4" r="2.500" fill="none" stroke="#333" stroke-width=".8"/><path d="M6 6l3 3" stroke="#333" stroke-width="1"/><path d="M5 1l4 4M9 1L5 5" stroke="#d8262c" stroke-width="1"/></svg><svg class=tbi style="left:588.9px;top:23.3px;overflow:visible" viewBox="0 0 10 10"><path d="M2 3.500l3-1.500 3 1.500v4L5 9 2 7.500z" fill="#7fb2e8" stroke="#3f78c5" stroke-width=".5"/><path d="M2 3.500L5 5l3-1.500M5 5v4" fill="none" stroke="#2c5fa5" stroke-width=".5"/></svg><svg class=tbi style="left:600.3px;top:23.3px;overflow:visible" viewBox="0 0 10 10"><path d="M2 3.500l3-1.500 3 1.500v4L5 9 2 7.500z" fill="#7fb2e8" stroke="#3f78c5" stroke-width=".5"/><path d="M2 3.500L5 5l3-1.500M5 5v4" fill="none" stroke="#2c5fa5" stroke-width=".5"/><path d="M2.200 .4l.6 1.300 1.400.2-1 1 .2 1.400-1.200-.7-1.200.7.2-1.400-1-1 1.400-.2z" fill="#f2d21a" stroke="#b89a00" stroke-width=".25"/></svg><svg class=tbi style="left:611.1px;top:23.3px;overflow:visible" viewBox="0 0 10 10"><rect x="1.500" y="3" width="5" height="5.500" fill="#3f78c5"/><rect x="4" y="1.500" width="4.500" height="4.500" fill="#7fb2e8" stroke="#fff" stroke-width=".4"/></svg><div class=sep style="left:622.4px;top:23.3px"></div><svg class=tbi style="left:624.5px;top:23.3px;overflow:visible" viewBox="0 0 10 10"><circle cx="2.500" cy="2" r="1.100" fill="#3f78c5"/><circle cx="2.500" cy="8" r="1.100" fill="#3f78c5"/><path d="M2.500 3v4" stroke="#2fa43a" stroke-width=".7"/><circle cx="7.500" cy="2" r="1.100" fill="#3f78c5"/><path d="M6 5.500l3 3M9 5.500l-3 3" stroke="#222" stroke-width=".7"/></svg><svg class=tbi style="left:635.8px;top:23.3px;overflow:visible" viewBox="0 0 10 10"><circle cx="2.500" cy="2" r="1.100" fill="#3f78c5"/><circle cx="2.500" cy="8" r="1.100" fill="#3f78c5"/><path d="M2.500 3v4" stroke="#2fa43a" stroke-width=".7"/><circle cx="7.500" cy="2" r="1.100" fill="#d8262c"/><path d="M6 5.500l3 3M9 5.500l-3 3" stroke="#222" stroke-width=".7"/></svg><svg class=tbi style="left:646.9px;top:23.3px;overflow:visible" viewBox="0 0 10 10"><circle cx="2.500" cy="2" r="1.100" fill="#3f78c5"/><circle cx="2.500" cy="8" r="1.100" fill="#3f78c5"/><path d="M2.500 3v4" stroke="#2fa43a" stroke-width=".7"/><circle cx="7.500" cy="2" r="1.100" fill="#d8262c"/><path d="M6 5.500l3 3M9 5.500l-3 3" stroke="#222" stroke-width=".7"/></svg><svg class=tbi style="left:658.5px;top:23.3px;overflow:visible" viewBox="0 0 10 10"><circle cx="2.500" cy="2" r="1.100" fill="#3f78c5"/><circle cx="2.500" cy="8" r="1.100" fill="#3f78c5"/><path d="M2.500 3v4" stroke="#2fa43a" stroke-width=".7"/><circle cx="7.500" cy="2" r="1.100" fill="#2fa43a"/><path d="M6 5.500l3 3M9 5.500l-3 3" stroke="#222" stroke-width=".7"/></svg><div class=dd style="left:668.9px;top:27.0px"></div><svg class=tbi style="left:674.9px;top:23.3px;overflow:visible" viewBox="0 0 10 10"><path d="M2 2h6L3 8h6" fill="none" stroke="#f2d21a" stroke-width="1.300"/><path d="M1.500 8.500L8.500 1.500" stroke="#d8262c" stroke-width=".8"/><path d="M6 8.500h3" stroke="#2fa43a" stroke-width="1"/></svg><div class=dd style="left:685.3px;top:27.0px"></div><div class=sep style="left:692.1px;top:23.3px"></div><svg class=tbi style="left:693.9px;top:23.3px;overflow:visible" viewBox="0 0 10 10"><rect x="1.500" y="3" width="5" height="5.500" fill="#3f78c5"/><rect x="4" y="1.500" width="4.500" height="4.500" fill="#7fb2e8" stroke="#fff" stroke-width=".4"/></svg><div class=dd style="left:704.2px;top:27.0px"></div><svg class=tbi style="left:710.3px;top:23.3px;overflow:visible" viewBox="0 0 10 10"><path d="M1 6.500c3-1.500 5-1.500 8 0" stroke="#3f78c5" stroke-width="1.300" fill="none"/></svg><div class=dd style="left:720.6px;top:27.0px"></div><svg class=tbi style="left:726.7px;top:23.3px;overflow:visible" viewBox="0 0 10 10"><path d="M2 8l1.500-5h1l1 3 1-2h1L9 8" fill="none" stroke="#55595e" stroke-width=".9"/></svg><div class=dd style="left:737.5px;top:27.0px"></div><svg class=tbi style="left:743.6px;top:23.3px;overflow:visible" viewBox="0 0 10 10"><path d="M1.500 3h7M1.500 6.500h7M3 3v3.500M7 3v3.500" fill="none" stroke="#8b8f94" stroke-width=".8"/></svg><div class=dd style="left:754.0px;top:27.0px"></div><svg class=tbi style="left:760.0px;top:23.3px;overflow:visible" viewBox="0 0 10 10"><path d="M1.500 2.500l7 5M8.500 2.500l-7 5" stroke="#d8262c" stroke-width="1"/><path d="M1 5h8" stroke="#3f78c5" stroke-width=".8"/></svg><svg class=tbi style="left:770.8px;top:23.3px;overflow:visible" viewBox="0 0 10 10"><path d="M1.500 2.500l6-1 1 6-6 1z" fill="#f0902a"/></svg><svg class=tbi style="left:4.4px;top:35.7px;overflow:visible" viewBox="0 0 10 10"><path d="M2.200 .4l.6 1.300 1.400.2-1 1 .2 1.400-1.200-.7-1.200.7.2-1.400-1-1 1.400-.2z" fill="#f2d21a" stroke="#b89a00" stroke-width=".25"/><circle cx="4.500" cy="5.500" r=".9" fill="#d8262c"/></svg><div class=dd style="left:16.0px;top:39.4px"></div><svg class=tbi style="left:22.0px;top:35.7px;overflow:visible" viewBox="0 0 10 10"><path d="M2 8.500L8.500 2" stroke="#d8262c" stroke-width="1"/><circle cx="2" cy="8.500" r=".9" fill="#d8262c"/><circle cx="8.500" cy="2" r=".9" fill="#d8262c"/><path d="M2.200 .4l.6 1.300 1.400.2-1 1 .2 1.400-1.200-.7-1.200.7.2-1.400-1-1 1.400-.2z" fill="#f2d21a" stroke="#b89a00" stroke-width=".25"/></svg><svg class=tbi style="left:33.4px;top:35.7px;overflow:visible" viewBox="0 0 10 10"><path d="M2 8.500L8.500 2" stroke="#3f78c5" stroke-width="1"/><circle cx="2" cy="8.500" r=".9" fill="#d8262c"/><circle cx="8.500" cy="2" r=".9" fill="#d8262c"/><path d="M2.200 .4l.6 1.300 1.400.2-1 1 .2 1.400-1.200-.7-1.200.7.2-1.400-1-1 1.400-.2z" fill="#f2d21a" stroke="#b89a00" stroke-width=".25"/></svg><div class=dd style="left:44.3px;top:39.4px"></div><svg class=tbi style="left:51.1px;top:35.7px;overflow:visible" viewBox="0 0 10 10"><path d="M4 2.500h4.500v3L5 8.500" fill="none" stroke="#d8262c" stroke-width="1"/><circle cx="8.500" cy="2.500" r=".8" fill="#d8262c"/><circle cx="5" cy="8.500" r=".8" fill="#d8262c"/><path d="M2.200 .4l.6 1.300 1.400.2-1 1 .2 1.400-1.200-.7-1.200.7.2-1.400-1-1 1.400-.2z" fill="#f2d21a" stroke="#b89a00" stroke-width=".25"/></svg><div class=dd style="left:60.9px;top:39.4px"></div><div class=sep style="left:66.9px;top:35.7px"></div><svg class=tbi style="left:68.7px;top:35.7px;overflow:visible" viewBox="0 0 10 10"><circle cx="5" cy="4" r="1.400" fill="#146a1e"/><path d="M2.500 9c0-3 5-3 5 0z" fill="#2fa43a"/><path d="M2.200 .4l.6 1.300 1.400.2-1 1 .2 1.400-1.200-.7-1.200.7.2-1.400-1-1 1.400-.2z" fill="#f2d21a" stroke="#b89a00" stroke-width=".25"/></svg><svg class=tbi style="left:80.1px;top:35.7px;overflow:visible" viewBox="0 0 10 10"><circle cx="5" cy="4" r="1.400" fill="#146a1e"/><path d="M2.500 9c0-3 5-3 5 0z" fill="#2fa43a"/><path d="M2.200 .4l.6 1.300 1.400.2-1 1 .2 1.400-1.200-.7-1.200.7.2-1.400-1-1 1.400-.2z" fill="#f2d21a" stroke="#b89a00" stroke-width=".25"/><path d="M1 7h8" stroke="#d8262c" stroke-width=".6"/></svg><svg class=tbi style="left:90.9px;top:35.7px;overflow:visible" viewBox="0 0 10 10"><path d="M2 8l2-4h5l-2 4z" fill="#7fb2e8" stroke="#3f78c5" stroke-width=".5"/><circle cx="2" cy="8" r=".8" fill="#d8262c"/><circle cx="7" cy="8" r=".8" fill="#d8262c"/><circle cx="9" cy="4" r=".8" fill="#d8262c"/><path d="M2.200 .4l.6 1.300 1.400.2-1 1 .2 1.400-1.200-.7-1.200.7.2-1.400-1-1 1.400-.2z" fill="#f2d21a" stroke="#b89a00" stroke-width=".25"/></svg><div class=sep style="left:103.0px;top:35.7px"></div><svg class=tbi style="left:105.3px;top:35.7px;overflow:visible" viewBox="0 0 10 10"><path d="M2 8l2-4h5l-2 4z" fill="#7fb2e8" stroke="#3f78c5" stroke-width=".5"/><circle cx="2" cy="8" r=".8" fill="#d8262c"/><circle cx="7" cy="8" r=".8" fill="#d8262c"/><circle cx="9" cy="4" r=".8" fill="#d8262c"/><path d="M2.200 .4l.6 1.300 1.400.2-1 1 .2 1.400-1.200-.7-1.200.7.2-1.400-1-1 1.400-.2z" fill="#f2d21a" stroke="#b89a00" stroke-width=".25"/></svg><div class=dd style="left:115.7px;top:39.4px"></div><svg class=tbi style="left:121.7px;top:35.7px;overflow:visible" viewBox="0 0 10 10"><path d="M2 8l2-4h5l-2 4z" fill="#7fb2e8" stroke="#3f78c5" stroke-width=".5"/><circle cx="2" cy="8" r=".8" fill="#d8262c"/><circle cx="7" cy="8" r=".8" fill="#d8262c"/><circle cx="9" cy="4" r=".8" fill="#d8262c"/><path d="M2.200 .4l.6 1.300 1.400.2-1 1 .2 1.400-1.200-.7-1.200.7.2-1.400-1-1 1.400-.2z" fill="#f2d21a" stroke="#b89a00" stroke-width=".25"/></svg><div class=dd style="left:132.1px;top:39.4px"></div><svg class=tbi style="left:138.6px;top:35.7px;overflow:visible" viewBox="0 0 10 10"><rect x="2" y="2" width="6" height="6" fill="#dbe8f8" stroke="#3f78c5" stroke-width="1"/><circle cx="2" cy="2" r=".9" fill="#d8262c"/><circle cx="8" cy="2" r=".9" fill="#d8262c"/><circle cx="2" cy="8" r=".9" fill="#d8262c"/><circle cx="8" cy="8" r=".9" fill="#d8262c"/></svg><div class=dd style="left:148.5px;top:39.4px"></div><svg class=tbi style="left:154.5px;top:35.7px;overflow:visible" viewBox="0 0 10 10"><path d="M2 8l2-4h5l-2 4z" fill="#7fb2e8" stroke="#3f78c5" stroke-width=".5"/><circle cx="2" cy="8" r=".8" fill="#d8262c"/><circle cx="7" cy="8" r=".8" fill="#d8262c"/><circle cx="9" cy="4" r=".8" fill="#d8262c"/><path d="M2.200 .4l.6 1.300 1.400.2-1 1 .2 1.400-1.200-.7-1.200.7.2-1.400-1-1 1.400-.2z" fill="#f2d21a" stroke="#b89a00" stroke-width=".25"/></svg><div class=dd style="left:164.9px;top:39.4px"></div><svg class=tbi style="left:171.4px;top:35.7px;overflow:visible" viewBox="0 0 10 10"><path d="M2 3.500l3-1.500 3 1.500v4L5 9 2 7.500z" fill="#7fb2e8" stroke="#3f78c5" stroke-width=".5"/><path d="M2 3.500L5 5l3-1.500M5 5v4" fill="none" stroke="#2c5fa5" stroke-width=".5"/><path d="M2.200 .4l.6 1.300 1.400.2-1 1 .2 1.400-1.200-.7-1.200.7.2-1.400-1-1 1.400-.2z" fill="#f2d21a" stroke="#b89a00" stroke-width=".25"/></svg><div class=sep style="left:183.0px;top:35.7px"></div><svg class=tbi style="left:183.5px;top:35.7px;overflow:visible" viewBox="0 0 10 10"><path d="M1.500 8l7-5M1.500 5.500l5-3.500" fill="none" stroke="#8b8f94" stroke-width=".8"/></svg><div class=dd style="left:195.2px;top:39.4px"></div><div class=sep style="left:201.9px;top:35.7px"></div><svg class=tbi style="left:203.2px;top:35.7px;overflow:visible" viewBox="0 0 10 10"><path d="M2 8.500L8.500 2" stroke="#f2d21a" stroke-width="1"/><circle cx="2" cy="8.500" r=".9" fill="#d8262c"/><circle cx="8.500" cy="2" r=".9" fill="#d8262c"/><path d="M2.200 .4l.6 1.300 1.400.2-1 1 .2 1.400-1.200-.7-1.200.7.2-1.400-1-1 1.400-.2z" fill="#f2d21a" stroke="#b89a00" stroke-width=".25"/></svg><svg class=tbi style="left:214.6px;top:35.7px;overflow:visible" viewBox="0 0 10 10"><path d="M2 8.500L8.500 2" stroke="#d8262c" stroke-width="1"/><circle cx="2" cy="8.500" r=".9" fill="#d8262c"/><circle cx="8.500" cy="2" r=".9" fill="#d8262c"/><path d="M2.200 .4l.6 1.300 1.400.2-1 1 .2 1.400-1.200-.7-1.200.7.2-1.400-1-1 1.400-.2z" fill="#f2d21a" stroke="#b89a00" stroke-width=".25"/></svg><svg class=tbi style="left:225.7px;top:35.7px;overflow:visible" viewBox="0 0 10 10"><path d="M2 8.500L8.500 2" stroke="#d8262c" stroke-width="1"/><circle cx="2" cy="8.500" r=".9" fill="#d8262c"/><circle cx="8.500" cy="2" r=".9" fill="#d8262c"/><path d="M2.200 .4l.6 1.300 1.400.2-1 1 .2 1.400-1.200-.7-1.200.7.2-1.400-1-1 1.400-.2z" fill="#f2d21a" stroke="#b89a00" stroke-width=".25"/></svg><svg class=tbi style="left:237.0px;top:35.7px;overflow:visible" viewBox="0 0 10 10"><path d="M2 8l2-4h5l-2 4z" fill="#7fb2e8" stroke="#3f78c5" stroke-width=".5"/><circle cx="2" cy="8" r=".8" fill="#d8262c"/><circle cx="7" cy="8" r=".8" fill="#d8262c"/><circle cx="9" cy="4" r=".8" fill="#d8262c"/><path d="M2.200 .4l.6 1.300 1.400.2-1 1 .2 1.400-1.200-.7-1.200.7.2-1.400-1-1 1.400-.2z" fill="#f2d21a" stroke="#b89a00" stroke-width=".25"/></svg><svg class=tbi style="left:247.9px;top:35.7px;overflow:visible" viewBox="0 0 10 10"><circle cx="5" cy="4" r="1.400" fill="#146a1e"/><path d="M2.500 9c0-3 5-3 5 0z" fill="#2fa43a"/><path d="M2.200 .4l.6 1.300 1.400.2-1 1 .2 1.400-1.200-.7-1.200.7.2-1.400-1-1 1.400-.2z" fill="#f2d21a" stroke="#b89a00" stroke-width=".25"/><path d="M1 7h8" stroke="#d8262c" stroke-width=".6"/></svg><div class=dd style="left:258.8px;top:39.4px"></div><svg class=tbi style="left:264.3px;top:35.7px;overflow:visible" viewBox="0 0 10 10"><path d="M2 8l2-4h5l-2 4z" fill="#7fb2e8" stroke="#3f78c5" stroke-width=".5"/><circle cx="2" cy="8" r=".8" fill="#d8262c"/><circle cx="7" cy="8" r=".8" fill="#d8262c"/><circle cx="9" cy="4" r=".8" fill="#d8262c"/><path d="M2.200 .4l.6 1.300 1.400.2-1 1 .2 1.400-1.200-.7-1.200.7.2-1.400-1-1 1.400-.2z" fill="#f2d21a" stroke="#b89a00" stroke-width=".25"/></svg><div class=dd style="left:275.4px;top:39.4px"></div><div class=sep style="left:282.7px;top:35.7px"></div><svg class=tbi style="left:285.2px;top:35.7px;overflow:visible" viewBox="0 0 10 10"><path d="M1 2h6L5 5v4L3.500 8V5z" fill="#3f78c5"/></svg><div class=sep style="left:297.3px;top:35.7px"></div><svg class=tbi style="left:299.6px;top:35.7px;overflow:visible" viewBox="0 0 10 10"><path d="M2 8V3l3-1.500L8 3v5z" fill="#dedede" stroke="#8b8f94" stroke-width=".7"/></svg><svg class=tbi style="left:311.0px;top:35.7px;overflow:visible" viewBox="0 0 10 10"><circle cx="5" cy="5" r="3" fill="none" stroke="#8b8f94" stroke-width=".9"/><path d="M2 5h6" stroke="#8b8f94" stroke-width=".6"/></svg><svg class=tbi style="left:321.8px;top:35.7px;overflow:visible" viewBox="0 0 10 10"><rect x="2" y="2" width="6" height="6" fill="#e4e4e4" stroke="#8b8f94" stroke-width=".8"/><path d="M3.500 5h3" stroke="#8b8f94" stroke-width=".7"/></svg><div class=sep style="left:333.1px;top:35.7px"></div><svg class=tbi style="left:335.7px;top:35.7px;overflow:visible" viewBox="0 0 10 10"><path d="M1.500 7.500c2-5 3-5 3.500-1s2 2 3.500-3" fill="none" stroke="#8b8f94" stroke-width=".8"/></svg><svg class=tbi style="left:347.0px;top:35.7px;overflow:visible" viewBox="0 0 10 10"><path d="M1.500 8l7-5M1.500 5.500l5-3.500" fill="none" stroke="#8b8f94" stroke-width=".8"/></svg><svg class=tbi style="left:358.2px;top:35.7px;overflow:visible" viewBox="0 0 10 10"><rect x="2" y="2" width="6" height="6" fill="#e4e4e4" stroke="#8b8f94" stroke-width=".8"/><path d="M3.500 5h3" stroke="#8b8f94" stroke-width=".7"/></svg><svg class=tbi style="left:369.0px;top:35.7px;overflow:visible" viewBox="0 0 10 10"><path d="M5 1.500L8.500 8h-7z" fill="#ececec" stroke="#8b8f94" stroke-width=".7"/></svg><svg class=tbi style="left:380.4px;top:35.7px;overflow:visible" viewBox="0 0 10 10"><path d="M1.500 8l7-5M1.500 5.500l5-3.500" fill="none" stroke="#8b8f94" stroke-width=".8"/></svg><div class=sep style="left:391.7px;top:35.7px"></div><svg class=tbi style="left:394.2px;top:35.7px;overflow:visible" viewBox="0 0 10 10"><path d="M2 2.500h6M2 5h6M2 7.500h6" stroke="#8b8f94" stroke-width=".9" stroke-dasharray="1.800 .8"/></svg><svg class=tbi style="left:405.1px;top:35.7px;overflow:visible" viewBox="0 0 10 10"><path d="M2 2.500h6M2 5h6M2 7.500h6" stroke="#8b8f94" stroke-width=".9" stroke-dasharray="1.800 .8"/></svg><svg class=tbi style="left:416.4px;top:35.7px;overflow:visible" viewBox="0 0 10 10"><path d="M2 2.500h6M2 5h6M2 7.500h6" stroke="#8b8f94" stroke-width=".9" stroke-dasharray="1.800 .8"/></svg><svg class=tbi style="left:416.1px;top:35.7px;overflow:visible" viewBox="0 0 10 10"><path d="M1.500 3h7M1.500 6.500h7M3 3v3.500M7 3v3.500" fill="none" stroke="#8b8f94" stroke-width=".8"/></svg><svg class=tbi style="left:427.4px;top:35.7px;overflow:visible" viewBox="0 0 10 10"><path d="M2 2.500h6M2 5h6M2 7.500h6" stroke="#8b8f94" stroke-width=".9" stroke-dasharray="1.800 .8"/></svg><svg class=tbi style="left:438.8px;top:35.7px;overflow:visible" viewBox="0 0 10 10"><path d="M1.500 8l7-5M1.500 5.500l5-3.500" fill="none" stroke="#8b8f94" stroke-width=".8"/></svg><svg class=tbi style="left:449.6px;top:35.7px;overflow:visible" viewBox="0 0 10 10"><path d="M2 8.500L8.500 2" stroke="#3f78c5" stroke-width="1"/><circle cx="2" cy="8.500" r=".9" fill="#d8262c"/><circle cx="8.500" cy="2" r=".9" fill="#d8262c"/><path d="M2.200 .4l.6 1.300 1.400.2-1 1 .2 1.400-1.200-.7-1.200.7.2-1.400-1-1 1.400-.2z" fill="#f2d21a" stroke="#b89a00" stroke-width=".25"/></svg><svg class=tbi style="left:460.5px;top:35.7px;overflow:visible" viewBox="0 0 10 10"><path d="M5 1.500v5" stroke="#f2d21a" stroke-width=".9"/><circle cx="5" cy="8" r="1.200" fill="#e020e0"/></svg><svg class=tbi style="left:471.8px;top:35.7px;overflow:visible" viewBox="0 0 10 10"><path d="M1.500 7.500c2-5 3-5 3.500-1s2 2 3.500-3" fill="none" stroke="#8b8f94" stroke-width=".8"/></svg><div class=sep style="left:483.1px;top:35.7px"></div><svg class=tbi style="left:484.9px;top:35.7px;overflow:visible" viewBox="0 0 10 10"><path d="M2 8V3l3-1.500L8 3v5z" fill="#dedede" stroke="#8b8f94" stroke-width=".7"/></svg><div class=dd style="left:496.6px;top:39.4px"></div><div class=sep style="left:503.3px;top:35.7px"></div><svg class=tbi style="left:506.9px;top:35.7px;overflow:visible" viewBox="0 0 10 10"><rect x="2" y="2" width="6" height="6" fill="#dbe8f8" stroke="#3f78c5" stroke-width="1"/><circle cx="2" cy="2" r=".9" fill="#d8262c"/><circle cx="8" cy="2" r=".9" fill="#d8262c"/><circle cx="2" cy="8" r=".9" fill="#d8262c"/><circle cx="8" cy="8" r=".9" fill="#d8262c"/></svg><svg class=tbi style="left:517.7px;top:35.7px;overflow:visible" viewBox="0 0 10 10"><path d="M1.500 6l3-4 4 2-3 4z" fill="#3f78c5"/><path d="M2 4l6 2.500M3 7.500l4-5" stroke="#d8262c" stroke-width=".9"/></svg><svg class=tbi style="left:529.1px;top:35.7px;overflow:visible" viewBox="0 0 10 10"><rect x="-.6" y="-1.200" width="11.200" height="12.400" fill="#cfe4f9" stroke="#9cc6ee" stroke-width=".4"/><path d="M1.500 6l3-4 4 2-3 4z" fill="#3f78c5"/><path d="M2 4l6 2.500M3 7.500l4-5" stroke="#d8262c" stroke-width=".9"/></svg><svg class=tbi style="left:540.5px;top:35.7px;overflow:visible" viewBox="0 0 10 10"><path d="M1.500 6l3-4 4 2-3 4z" fill="#3f78c5"/><path d="M2 4l6 2.500M3 7.500l4-5" stroke="#d8262c" stroke-width=".9"/></svg><svg class=tbi style="left:551.3px;top:35.7px;overflow:visible" viewBox="0 0 10 10"><path d="M1.500 8l7-5M1.500 5.500l5-3.500" fill="none" stroke="#8b8f94" stroke-width=".8"/></svg><div class=sep style="left:562.6px;top:35.7px"></div><svg class=tbi style="left:564.9px;top:35.7px;overflow:visible" viewBox="0 0 10 10"><circle cx="5" cy="5" r="3" fill="none" stroke="#8b8f94" stroke-width=".9"/><path d="M2 5h6" stroke="#8b8f94" stroke-width=".6"/></svg><svg class=tbi style="left:575.8px;top:35.7px;overflow:visible" viewBox="0 0 10 10"><path d="M5 1.500L8.500 8h-7z" fill="#ececec" stroke="#8b8f94" stroke-width=".7"/></svg><svg class=tbi style="left:587.1px;top:35.7px;overflow:visible" viewBox="0 0 10 10"><path d="M1.500 1.500l7 7M8.500 1.500l-7 7" stroke="#d8262c" stroke-width="1.100"/></svg><svg class=tbi style="left:598.5px;top:35.7px;overflow:visible" viewBox="0 0 10 10"><rect x="1.500" y="2.500" width="7" height="6" rx=".8" fill="none" stroke="#444" stroke-width=".9"/><circle cx="5" cy="5.500" r="1.500" fill="none" stroke="#444" stroke-width=".8"/></svg><svg class=tbi style="left:609.8px;top:35.7px;overflow:visible" viewBox="0 0 10 10"><path d="M1.500 3h7M1.500 6.500h7M3 3v3.500M7 3v3.500" fill="none" stroke="#8b8f94" stroke-width=".8"/></svg><div class=a style="left:1.500px;top:46.400px;width:135.500px;height:10.200px;background:#d9e5f3"></div><span class=a style="left:3.0px;top:48.1px;line-height:7px;font-size:5.300px;color:#222"><b>Navigator - Data</b></span><div class=a style="left:121.500px;top:49.500px;width:3.500px;height:3.500px;border:.6px solid #333"></div><svg class=a style="left:130px;top:49.200px" width="4.200" height="4.200" viewBox="0 0 10 10"><path d="M1 1l8 8M9 1L1 9" stroke="#222" stroke-width="1.500"/></svg><div class=a style="left:1.500px;top:56.600px;width:135px;height:486px;background:#fff;border-right:.7px solid #d0d0d0"></div><div class=a style="left:3.0px;top:58.7px;width:7px;height:5.500px;background:#1d3e8a"></div><span class=t style="left:12.0px;top:57.40px">RFEM</span><svg class=nch style="left:3.1px;top:67.2px" viewBox="0 0 10 10"><path d="M1.500 3.500L5 7 8.500 3.500" fill="none" stroke="#222" stroke-width="1.300"/></svg><div class=a style="left:12.3px;top:66.2px;width:5.500px;height:7px;background:#fff;border:.6px solid #555"></div><div class=a style="left:13.5px;top:68.7px;width:3px;height:3px;background:#2a5db0;border-radius:50%"></div><span class=t style="left:21.0px;top:65.62px"><b>Concrete<i class=u>_</i>and<i class=u>_</i>Steel<i class=u>_</i>Structure.rf6*</b></span><svg class=nch style="left:12.2px;top:75.4px" viewBox="0 0 10 10"><path d="M1.500 3.500L5 7 8.500 3.500" fill="none" stroke="#222" stroke-width="1.300"/></svg><div class=fold style="left:20.7px;top:75.1px"></div><span class=t style="left:29.6px;top:73.84px">Basic Objects</span><svg class=nch style="left:21.1px;top:83.7px" viewBox="0 0 10 10"><path d="M3.500 1.500L7 5 3.500 8.500" fill="none" stroke="#555" stroke-width="1.100"/></svg><svg class=a style="left:29.3px;top:82.7px" width="7" height="7" viewBox="0 0 10 10"><rect x="1" y="2" width="5" height="6" fill="#3a7bd5"/><rect x="4" y="1" width="5" height="5" fill="#7ab8ea" opacity=".85"/></svg><span class=t style="left:38.7px;top:82.05px">Materials</span><svg class=nch style="left:21.1px;top:91.9px" viewBox="0 0 10 10"><path d="M3.500 1.500L7 5 3.500 8.500" fill="none" stroke="#555" stroke-width="1.100"/></svg><svg class=a style="left:29.3px;top:90.9px" width="7" height="7" viewBox="0 0 10 10"><rect x="1" y="2" width="5" height="6" fill="#3a7bd5"/><rect x="4" y="1" width="5" height="5" fill="#f0c030" opacity=".85"/></svg><span class=t style="left:38.7px;top:90.27px">Sections</span><svg class=nch style="left:21.1px;top:100.1px" viewBox="0 0 10 10"><path d="M3.500 1.500L7 5 3.500 8.500" fill="none" stroke="#555" stroke-width="1.100"/></svg><svg class=a style="left:29.3px;top:99.1px" width="7" height="7" viewBox="0 0 10 10"><rect x="1" y="2" width="5" height="6" fill="#2e5fa8"/><rect x="4" y="1" width="5" height="5" fill="#f0c030" opacity=".85"/></svg><span class=t style="left:38.7px;top:98.49px">Thicknesses</span><svg class=nch style="left:21.1px;top:108.3px" viewBox="0 0 10 10"><path d="M3.500 1.500L7 5 3.500 8.500" fill="none" stroke="#555" stroke-width="1.100"/></svg><div class=a style="left:32.1px;top:110.1px;width:1.500px;height:1.500px;background:#d22"></div><span class=t style="left:38.7px;top:106.71px">Nodes</span><svg class=nch style="left:21.1px;top:116.5px" viewBox="0 0 10 10"><path d="M3.500 1.500L7 5 3.500 8.500" fill="none" stroke="#555" stroke-width="1.100"/></svg><svg class=a style="left:29.3px;top:115.5px" width="7" height="7" viewBox="0 0 10 10"><path d="M1 9L9 1" stroke="#c33" stroke-width="1.300"/><circle cx="7.500" cy="7.500" r="1.300" fill="#36a"/></svg><span class=t style="left:38.7px;top:114.93px">Lines</span><svg class=nch style="left:21.1px;top:124.7px" viewBox="0 0 10 10"><path d="M3.500 1.500L7 5 3.500 8.500" fill="none" stroke="#555" stroke-width="1.100"/></svg><svg class=a style="left:29.3px;top:123.7px" width="7" height="7" viewBox="0 0 10 10"><path d="M1 9L9 1" stroke="#c33" stroke-width="1.300"/><circle cx="7.500" cy="7.500" r="1.300" fill="#36a"/></svg><span class=t style="left:38.7px;top:123.14px">Members</span><svg class=nch style="left:21.1px;top:133.0px" viewBox="0 0 10 10"><path d="M3.500 1.500L7 5 3.500 8.500" fill="none" stroke="#555" stroke-width="1.100"/></svg><svg class=a style="left:29.3px;top:132.0px" width="7" height="7" viewBox="0 0 10 10"><path d="M1 9L9 1" stroke="#c33" stroke-width="1.300"/><circle cx="7.500" cy="7.500" r="1.300" fill="#36a"/></svg><span class=t style="left:38.7px;top:131.36px">Member Representatives</span><svg class=nch style="left:21.1px;top:141.2px" viewBox="0 0 10 10"><path d="M3.500 1.500L7 5 3.500 8.500" fill="none" stroke="#555" stroke-width="1.100"/></svg><svg class=a style="left:29.3px;top:140.2px" width="7" height="7" viewBox="0 0 10 10"><rect x="1" y="2" width="5" height="6" fill="#2e5fa8"/><rect x="4" y="1" width="5" height="5" fill="#d33" opacity=".85"/></svg><span class=t style="left:38.7px;top:139.58px">Surfaces</span><svg class=nch style="left:21.1px;top:149.4px" viewBox="0 0 10 10"><path d="M3.500 1.500L7 5 3.500 8.500" fill="none" stroke="#555" stroke-width="1.100"/></svg><svg class=a style="left:29.3px;top:148.4px" width="7" height="7" viewBox="0 0 10 10"><rect x="1" y="2" width="5" height="6" fill="#4aa3e0"/><rect x="4" y="1" width="5" height="5" fill="#5a9ae0" opacity=".85"/></svg><span class=t style="left:38.7px;top:147.80px">Openings</span><svg class=a style="left:29.3px;top:156.6px" width="7" height="7" viewBox="0 0 10 10"><rect x="1" y="2" width="5" height="6" fill="#4aa3e0"/><rect x="4" y="1" width="5" height="5" fill="#f0c030" opacity=".85"/></svg><span class=t style="left:38.7px;top:156.02px">Solids</span><svg class=a style="left:29.3px;top:164.8px" width="7" height="7" viewBox="0 0 10 10"><path d="M1 9L9 1" stroke="#c33" stroke-width="1.300"/><circle cx="7.500" cy="7.500" r="1.300" fill="#36a"/></svg><span class=t style="left:38.7px;top:164.23px">Line Sets</span><svg class=a style="left:29.3px;top:173.1px" width="7" height="7" viewBox="0 0 10 10"><path d="M1 9L9 1" stroke="#c33" stroke-width="1.300"/><circle cx="7.500" cy="7.500" r="1.300" fill="#36a"/></svg><span class=t style="left:38.7px;top:172.45px">Member Sets</span><svg class=a style="left:29.3px;top:181.3px" width="7" height="7" viewBox="0 0 10 10"><rect x="1" y="2" width="5" height="6" fill="#3a7bd5"/><rect x="4" y="1" width="5" height="5" fill="#d33" opacity=".85"/></svg><span class=t style="left:38.7px;top:180.67px">Surface Sets</span><svg class=a style="left:29.3px;top:189.5px" width="7" height="7" viewBox="0 0 10 10"><rect x="1" y="2" width="5" height="6" fill="#4aa3e0"/><rect x="4" y="1" width="5" height="5" fill="#5a9ae0" opacity=".85"/></svg><span class=t style="left:38.7px;top:188.89px">Solid Sets</span><svg class=nch style="left:12.2px;top:198.7px" viewBox="0 0 10 10"><path d="M3.500 1.500L7 5 3.500 8.500" fill="none" stroke="#555" stroke-width="1.100"/></svg><div class=fold style="left:20.7px;top:198.4px"></div><span class=t style="left:29.6px;top:197.11px">Special Objects</span><svg class=nch style="left:12.2px;top:206.9px" viewBox="0 0 10 10"><path d="M3.500 1.500L7 5 3.500 8.500" fill="none" stroke="#555" stroke-width="1.100"/></svg><div class=fold style="left:20.7px;top:206.6px"></div><span class=t style="left:29.6px;top:205.32px">Types for Nodes</span><svg class=nch style="left:12.2px;top:215.1px" viewBox="0 0 10 10"><path d="M3.500 1.500L7 5 3.500 8.500" fill="none" stroke="#555" stroke-width="1.100"/></svg><div class=fold style="left:20.7px;top:214.8px"></div><span class=t style="left:29.6px;top:213.54px">Types for Lines</span><svg class=nch style="left:12.2px;top:223.4px" viewBox="0 0 10 10"><path d="M3.500 1.500L7 5 3.500 8.500" fill="none" stroke="#555" stroke-width="1.100"/></svg><div class=fold style="left:20.7px;top:223.1px"></div><span class=t style="left:29.6px;top:221.76px">Types for Members</span><svg class=nch style="left:12.2px;top:231.6px" viewBox="0 0 10 10"><path d="M3.500 1.500L7 5 3.500 8.500" fill="none" stroke="#555" stroke-width="1.100"/></svg><div class=fold style="left:20.7px;top:231.3px"></div><span class=t style="left:29.6px;top:229.98px">Types for Surfaces</span><svg class=nch style="left:12.2px;top:239.8px" viewBox="0 0 10 10"><path d="M3.500 1.500L7 5 3.500 8.500" fill="none" stroke="#555" stroke-width="1.100"/></svg><div class=fold style="left:20.7px;top:239.5px"></div><span class=t style="left:29.6px;top:238.20px">Types for Solids</span><svg class=nch style="left:12.2px;top:248.0px" viewBox="0 0 10 10"><path d="M3.500 1.500L7 5 3.500 8.500" fill="none" stroke="#555" stroke-width="1.100"/></svg><div class=fold style="left:20.7px;top:247.7px"></div><span class=t style="left:29.6px;top:246.41px">Types for Special Objects</span><svg class=nch style="left:12.2px;top:256.2px" viewBox="0 0 10 10"><path d="M3.500 1.500L7 5 3.500 8.500" fill="none" stroke="#555" stroke-width="1.100"/></svg><div class=fold style="left:20.7px;top:255.9px"></div><span class=t style="left:29.6px;top:254.63px">Types for Concrete Design</span><svg class=nch style="left:12.2px;top:264.4px" viewBox="0 0 10 10"><path d="M3.500 1.500L7 5 3.500 8.500" fill="none" stroke="#555" stroke-width="1.100"/></svg><div class=fold style="left:20.7px;top:264.1px"></div><span class=t style="left:29.6px;top:262.85px">Types for Steel Design</span><svg class=nch style="left:12.2px;top:272.7px" viewBox="0 0 10 10"><path d="M3.500 1.500L7 5 3.500 8.500" fill="none" stroke="#555" stroke-width="1.100"/></svg><div class=fold style="left:20.7px;top:272.4px"></div><span class=t style="left:29.6px;top:271.07px">Imperfections</span><svg class=nch style="left:12.2px;top:280.9px" viewBox="0 0 10 10"><path d="M1.500 3.500L5 7 8.500 3.500" fill="none" stroke="#222" stroke-width="1.300"/></svg><div class=fold style="left:20.7px;top:280.6px"></div><span class=t style="left:29.6px;top:279.29px">Load Cases &amp; Combinations</span><svg class=nch style="left:21.1px;top:289.1px" viewBox="0 0 10 10"><path d="M3.500 1.500L7 5 3.500 8.500" fill="none" stroke="#555" stroke-width="1.100"/></svg><svg class=a style="left:29.3px;top:288.1px" width="7" height="7" viewBox="0 0 10 10"><path d="M1 2h6a2.500 2.500 0 0 1 0 6H1" fill="none" stroke="#333" stroke-width="1.200"/><circle cx="8" cy="5" r="1.300" fill="#36c"/></svg><span class=t style="left:38.7px;top:287.50px">Load Cases</span><svg class=nch style="left:21.1px;top:297.3px" viewBox="0 0 10 10"><path d="M3.500 1.500L7 5 3.500 8.500" fill="none" stroke="#555" stroke-width="1.100"/></svg><svg class=a style="left:29.3px;top:296.3px" width="7" height="7" viewBox="0 0 10 10"><path d="M1 2h6a2.500 2.500 0 0 1 0 6H1" fill="none" stroke="#333" stroke-width="1.200"/><circle cx="8" cy="5" r="1.300" fill="#36c"/></svg><span class=t style="left:38.7px;top:295.72px">Actions</span><svg class=nch style="left:21.1px;top:305.5px" viewBox="0 0 10 10"><path d="M3.500 1.500L7 5 3.500 8.500" fill="none" stroke="#555" stroke-width="1.100"/></svg><svg class=a style="left:29.3px;top:304.5px" width="7" height="7" viewBox="0 0 10 10"><path d="M1 2h6a2.500 2.500 0 0 1 0 6H1" fill="none" stroke="#333" stroke-width="1.200"/><circle cx="8" cy="5" r="1.300" fill="#36c"/></svg><span class=t style="left:38.7px;top:303.94px">Design Situations</span><svg class=nch style="left:21.1px;top:313.8px" viewBox="0 0 10 10"><path d="M3.500 1.500L7 5 3.500 8.500" fill="none" stroke="#555" stroke-width="1.100"/></svg><svg class=a style="left:29.3px;top:312.8px" width="7" height="7" viewBox="0 0 10 10"><path d="M1 2h6a2.500 2.500 0 0 1 0 6H1" fill="none" stroke="#333" stroke-width="1.200"/><circle cx="8" cy="5" r="1.300" fill="#36c"/></svg><span class=t style="left:38.7px;top:312.16px">Action Combinations</span><svg class=nch style="left:21.1px;top:322.0px" viewBox="0 0 10 10"><path d="M3.500 1.500L7 5 3.500 8.500" fill="none" stroke="#555" stroke-width="1.100"/></svg><svg class=a style="left:29.3px;top:321.0px" width="7" height="7" viewBox="0 0 10 10"><path d="M1 2h6a2.500 2.500 0 0 1 0 6H1" fill="none" stroke="#333" stroke-width="1.200"/><circle cx="8" cy="5" r="1.300" fill="#36c"/></svg><span class=t style="left:38.7px;top:320.38px">Load Combinations</span><svg class=nch style="left:21.1px;top:330.2px" viewBox="0 0 10 10"><path d="M3.500 1.500L7 5 3.500 8.500" fill="none" stroke="#555" stroke-width="1.100"/></svg><svg class=a style="left:29.3px;top:329.2px" width="7" height="7" viewBox="0 0 10 10"><path d="M1 2h6a2.500 2.500 0 0 1 0 6H1" fill="none" stroke="#333" stroke-width="1.200"/><circle cx="8" cy="5" r="1.300" fill="#36c"/></svg><span class=t style="left:38.7px;top:328.59px">Static Analysis Settings</span><svg class=nch style="left:21.1px;top:338.4px" viewBox="0 0 10 10"><path d="M3.500 1.500L7 5 3.500 8.500" fill="none" stroke="#555" stroke-width="1.100"/></svg><svg class=a style="left:29.3px;top:337.4px" width="7" height="7" viewBox="0 0 10 10"><path d="M1 2h6a2.500 2.500 0 0 1 0 6H1" fill="none" stroke="#333" stroke-width="1.200"/><circle cx="8" cy="5" r="1.300" fill="#36c"/></svg><span class=t style="left:38.7px;top:336.81px">Combination Wizards</span><svg class=a style="left:29.3px;top:345.6px" width="7" height="7" viewBox="0 0 10 10"><path d="M1 2h6a2.500 2.500 0 0 1 0 6H1" fill="none" stroke="#333" stroke-width="1.200"/><circle cx="8" cy="5" r="1.300" fill="#36c"/></svg><span class=t style="left:38.7px;top:345.03px">Relationship Between Load Cases</span><svg class=nch style="left:12.2px;top:354.8px" viewBox="0 0 10 10"><path d="M3.500 1.500L7 5 3.500 8.500" fill="none" stroke="#555" stroke-width="1.100"/></svg><div class=fold style="left:20.7px;top:354.5px"></div><span class=t style="left:29.6px;top:353.25px">Load Wizards</span><svg class=nch style="left:12.2px;top:363.1px" viewBox="0 0 10 10"><path d="M1.500 3.500L5 7 8.500 3.500" fill="none" stroke="#222" stroke-width="1.300"/></svg><div class=fold style="left:20.7px;top:362.8px"></div><span class=t style="left:29.6px;top:361.47px">Loads</span><svg class=nch style="left:21.1px;top:371.3px" viewBox="0 0 10 10"><path d="M3.500 1.500L7 5 3.500 8.500" fill="none" stroke="#555" stroke-width="1.100"/></svg><div class=fold style="left:29.5px;top:371.0px"></div><span class=t style="left:38.7px;top:369.68px">LC1 - Self-weight</span><svg class=nch style="left:21.1px;top:379.5px" viewBox="0 0 10 10"><path d="M3.500 1.500L7 5 3.500 8.500" fill="none" stroke="#555" stroke-width="1.100"/></svg><div class=fold style="left:29.5px;top:379.2px"></div><span class=t style="left:38.7px;top:377.90px">LC2 - LL1</span><svg class=nch style="left:21.1px;top:387.7px" viewBox="0 0 10 10"><path d="M3.500 1.500L7 5 3.500 8.500" fill="none" stroke="#555" stroke-width="1.100"/></svg><div class=fold style="left:29.5px;top:387.4px"></div><span class=t style="left:38.7px;top:386.12px">LC3 - LL2</span><svg class=nch style="left:21.1px;top:395.9px" viewBox="0 0 10 10"><path d="M3.500 1.500L7 5 3.500 8.500" fill="none" stroke="#555" stroke-width="1.100"/></svg><div class=fold style="left:29.5px;top:395.6px"></div><span class=t style="left:38.7px;top:394.34px">LC4 - Wind in X</span><svg class=a style="left:20.5px;top:403.2px" width="7" height="7" viewBox="0 0 10 10"><path d="M1 2h6a2.500 2.500 0 0 1 0 6H1" fill="none" stroke="#333" stroke-width="1.200"/><circle cx="8" cy="5" r="1.300" fill="#36c"/></svg><span class=t style="left:29.6px;top:402.56px">Calculation Diagrams</span><svg class=nch style="left:12.2px;top:412.4px" viewBox="0 0 10 10"><path d="M3.500 1.500L7 5 3.500 8.500" fill="none" stroke="#555" stroke-width="1.100"/></svg><div class=fold style="left:20.7px;top:412.1px"></div><span class=t style="left:29.6px;top:410.77px">Result Objects</span><svg class=nch style="left:12.2px;top:420.6px" viewBox="0 0 10 10"><path d="M3.500 1.500L7 5 3.500 8.500" fill="none" stroke="#555" stroke-width="1.100"/></svg><div class=fold style="left:20.7px;top:420.3px"></div><span class=t style="left:29.6px;top:418.99px">Results</span><svg class=nch style="left:12.2px;top:428.8px" viewBox="0 0 10 10"><path d="M3.500 1.500L7 5 3.500 8.500" fill="none" stroke="#555" stroke-width="1.100"/></svg><div class=fold style="left:20.7px;top:428.5px"></div><span class=t style="left:29.6px;top:427.21px">Guide Objects</span><svg class=nch style="left:12.2px;top:437.0px" viewBox="0 0 10 10"><path d="M3.500 1.500L7 5 3.500 8.500" fill="none" stroke="#555" stroke-width="1.100"/></svg><div class=fold style="left:20.7px;top:436.7px"></div><span class=t style="left:29.6px;top:435.43px">Concrete Design</span><svg class=nch style="left:12.2px;top:445.2px" viewBox="0 0 10 10"><path d="M3.500 1.500L7 5 3.500 8.500" fill="none" stroke="#555" stroke-width="1.100"/></svg><div class=fold style="left:20.7px;top:444.9px"></div><span class=t style="left:29.6px;top:443.65px">Steel Design</span><svg class=nch style="left:12.2px;top:453.5px" viewBox="0 0 10 10"><path d="M1.500 3.500L5 7 8.500 3.500" fill="none" stroke="#222" stroke-width="1.300"/></svg><div class=fold style="left:20.7px;top:453.2px"></div><span class=t style="left:29.6px;top:451.86px">Printout Reports</span><div class=a style="left:30.1px;top:460.7px;width:5.500px;height:7px;background:#d8d8d8;border:.5px solid #999"></div><span class=t style="left:38.7px;top:460.08px">1</span><div class=a style="left:1.500px;top:542.600px;width:135.500px;height:10.800px;background:#f0f0f0;border-top:.6px solid #d5d5d5"></div><div class=a style="left:2px;top:543px;width:11.500px;height:10.400px;background:#fff"></div><svg class=tbi style="left:3.8px;top:543.5px;overflow:visible" viewBox="0 0 10 10"><rect x="1" y="2.500" width="7" height="5" rx="1" fill="#f0c040" stroke="#a07a10" stroke-width=".5"/><circle cx="7" cy="7" r="2" fill="#3f78c5"/></svg><svg class=tbi style="left:17.5px;top:543.5px;overflow:visible" viewBox="0 0 10 10"><path d="M1 5c2-3 6-3 8 0-2 3-6 3-8 0z" fill="none" stroke="#333" stroke-width=".8"/><circle cx="5" cy="5" r="1.500" fill="#1d3e8a"/></svg><svg class=tbi style="left:31.0px;top:543.5px;overflow:visible" viewBox="0 0 10 10"><rect x="1.500" y="3" width="5" height="4" fill="#333"/><path d="M6.500 5l2.500-2v4z" fill="#333"/></svg><div class=a style="left:138.600px;top:47px;width:696.400px;height:506.400px;background:#1e1e1e;overflow:hidden"><svg style="position:absolute;left:0;top:0" width="695.4" height="506.4" viewBox="908.6 222.0 695.4 506.4"><defs><linearGradient id="gslab" gradientUnits="userSpaceOnUse" x1="1060" y1="340" x2="1520" y2="430"><stop offset="0" stop-color="#bec0c1"/><stop offset=".4" stop-color="#b1b3b5"/><stop offset="1" stop-color="#a9abad"/></linearGradient><linearGradient id="gback" gradientUnits="userSpaceOnUse" x1="1139" y1="0" x2="1360" y2="0"><stop offset="0" stop-color="#d8d8d8"/><stop offset=".06" stop-color="#e2e2e2"/><stop offset=".17" stop-color="#f6f6f6"/><stop offset=".27" stop-color="#e9e9e9"/><stop offset=".42" stop-color="#f3f3f3"/><stop offset=".55" stop-color="#e4e4e4"/><stop offset=".75" stop-color="#ededed"/><stop offset="1" stop-color="#e6e6e6"/></linearGradient><linearGradient id="gdoor" gradientUnits="userSpaceOnUse" x1="1062" y1="0" x2="1139" y2="0"><stop offset="0" stop-color="#dadada"/><stop offset="1" stop-color="#cfcfcf"/></linearGradient><linearGradient id="gbeam" gradientUnits="userSpaceOnUse" x1="0" y1="409" x2="3" y2="424"><stop offset="0" stop-color="#86c6ea"/><stop offset=".5" stop-color="#6fb4dd"/><stop offset="1" stop-color="#62a6d2"/></linearGradient><linearGradient id="gcl" x1="0" y1="0" x2="1" y2="0"><stop offset="0" stop-color="#d0d0d0"/><stop offset="1" stop-color="#c2c2c2"/></linearGradient><filter id="bl" x="-5%" y="-50%" width="110%" height="200%"><feGaussianBlur stdDeviation="1.6"/></filter><linearGradient id="gcn" x1="0" y1="0" x2="0" y2="1"><stop offset="0" stop-color="#b9b9b9"/><stop offset="1" stop-color="#cdcdcd"/></linearGradient></defs><polygon points="1201.4,307.6 2117.7,465.5 1252.7,1025.6 336.4,867.7" fill="#252525" /><polygon points="988.0,575.0 1240.0,543.5 1240.0,552.5 988.0,577.0" fill="#ffffff" opacity="0.05" filter="url(#bl)"/><polygon points="1218.0,614.0 1604.0,570.0 1604.0,580.0 1218.0,616.0" fill="#ffffff" opacity="0.06" filter="url(#bl)"/><polygon points="1371.0,640.0 1604.0,618.0 1604.0,626.0 1371.0,642.0" fill="#ffffff" opacity="0.06" filter="url(#bl)"/><polygon points="1297.0,562.0 1604.0,525.5 1604.0,534.5 1297.0,564.0" fill="#ffffff" opacity="0.05" filter="url(#bl)"/><polygon points="1060.0,522.0 1200.0,509.0 1200.0,515.0 1060.0,524.0" fill="#ffffff" opacity="0.04" filter="url(#bl)"/><polygon points="1371.0,558.5 1604.0,535.5 1604.0,544.5 1371.0,561.5" fill="#ffffff" opacity="0.045" filter="url(#bl)"/><polygon points="1528.0,536.0 1604.0,525.5 1604.0,530.5 1528.0,538.0" fill="#ffffff" opacity="0.06" filter="url(#bl)"/><polygon points="1371.0,598.5 1604.0,579.0 1604.0,587.0 1371.0,601.5" fill="#ffffff" opacity="0.04" filter="url(#bl)"/><polygon points="1528.0,470.0 1604.0,455.0 1604.0,520.0 1528.0,535.0" fill="#ffffff" opacity=".035" filter="url(#bl)"/><polygon points="1185.0,542.5 1280.0,534.5 1280.0,541.5 1185.0,547.5" fill="#ffffff" opacity="0.04" filter="url(#bl)"/><polygon points="1371.0,531.0 1604.0,514.0 1604.0,522.0 1371.0,535.0" fill="#ffffff" opacity="0.04" filter="url(#bl)"/><line x1="1201.4" y1="307.6" x2="1965.0" y2="439.2" stroke="#3c464b" stroke-width="0.8" /><line x1="1201.4" y1="307.6" x2="415.0" y2="816.8" stroke="#3c464b" stroke-width="0.8" /><line x1="1965.0" y1="439.2" x2="1178.6" y2="948.4" stroke="#3c464b" stroke-width="0.8" /><line x1="808.2" y1="562.2" x2="1571.8" y2="693.8" stroke="#3c464b" stroke-width="0.9" /><line x1="1583.2" y1="373.4" x2="796.8" y2="882.6" stroke="#3c464b" stroke-width="0.9" /><path d="M925.4 485.8h1.5M945.1 473.1h1.5M964.7 460.4h1.5M984.4 447.6h1.5M1004.1 434.9h1.5M1023.7 422.2h1.5M1043.4 409.4h1.5M1063.0 396.7h1.5M1082.7 384.0h1.5M1102.3 371.2h1.5M1122.0 358.5h1.5M1141.7 345.8h1.5M1161.3 333.1h1.5M1181.0 320.3h1.5M1200.7 307.6h1.5M924.3 517.9h1.5M943.9 505.1h1.5M963.6 492.4h1.5M983.2 479.7h1.5M1002.9 466.9h1.5M1022.6 454.2h1.5M1042.2 441.5h1.5M1061.9 428.8h1.5M1081.5 416.0h1.5M1101.2 403.3h1.5M1120.9 390.6h1.5M1140.5 377.8h1.5M1160.2 365.1h1.5M1179.8 352.4h1.5M1199.5 339.6h1.5M1219.2 326.9h1.5M1238.8 314.2h1.5M923.1 549.9h1.5M942.8 537.2h1.5M962.4 524.4h1.5M982.1 511.7h1.5M1001.8 499.0h1.5M1021.4 486.2h1.5M1041.1 473.5h1.5M1060.8 460.8h1.5M1080.4 448.1h1.5M1100.1 435.3h1.5M1119.7 422.6h1.5M1139.4 409.9h1.5M1159.0 397.1h1.5M1178.7 384.4h1.5M1198.4 371.7h1.5M1218.0 359.0h1.5M1237.7 346.2h1.5M1257.3 333.5h1.5M1277.0 320.8h1.5M922.0 581.9h1.5M941.6 569.2h1.5M961.3 556.5h1.5M981.0 543.8h1.5M1000.6 531.0h1.5M1020.3 518.3h1.5M1040.0 505.6h1.5M1059.6 492.8h1.5M1079.3 480.1h1.5M1098.9 467.4h1.5M1118.6 454.6h1.5M1138.2 441.9h1.5M1157.9 429.2h1.5M1177.6 416.5h1.5M1197.2 403.7h1.5M1216.9 391.0h1.5M1236.5 378.3h1.5M1256.2 365.5h1.5M1275.9 352.8h1.5M1295.5 340.1h1.5M1315.2 327.3h1.5M920.9 614.0h1.5M940.5 601.2h1.5M960.2 588.5h1.5M979.8 575.8h1.5M999.5 563.1h1.5M1019.2 550.3h1.5M1038.8 537.6h1.5M1058.5 524.9h1.5M1078.1 512.1h1.5M1097.8 499.4h1.5M1117.5 486.7h1.5M1137.1 473.9h1.5M1156.8 461.2h1.5M1176.4 448.5h1.5M1196.1 435.8h1.5M1215.8 423.0h1.5M1235.4 410.3h1.5M1255.1 397.6h1.5M1274.7 384.8h1.5M1294.4 372.1h1.5M1314.1 359.4h1.5M1333.7 346.6h1.5M1353.4 333.9h1.5M919.7 646.0h1.5M939.4 633.3h1.5M959.0 620.6h1.5M978.7 607.8h1.5M998.4 595.1h1.5M1018.0 582.4h1.5M1037.7 569.6h1.5M1057.3 556.9h1.5M1077.0 544.2h1.5M1096.7 531.5h1.5M1116.3 518.7h1.5M1136.0 506.0h1.5M1155.6 493.3h1.5M1175.3 480.5h1.5M1195.0 467.8h1.5M1214.6 455.1h1.5M1234.3 442.3h1.5M1253.9 429.6h1.5M1273.6 416.9h1.5M1293.2 404.1h1.5M1312.9 391.4h1.5M1332.6 378.7h1.5M1352.2 366.0h1.5M1371.9 353.2h1.5M1391.5 340.5h1.5M918.6 678.1h1.5M938.2 665.3h1.5M957.9 652.6h1.5M977.5 639.9h1.5M997.2 627.1h1.5M1016.9 614.4h1.5M1036.5 601.7h1.5M1056.2 588.9h1.5M1075.8 576.2h1.5M1095.5 563.5h1.5M1115.2 550.8h1.5M1134.8 538.0h1.5M1154.5 525.3h1.5M1174.2 512.6h1.5M1193.8 499.8h1.5M1213.5 487.1h1.5M1233.1 474.4h1.5M1252.8 461.6h1.5M1272.5 448.9h1.5M1292.1 436.2h1.5M1311.8 423.5h1.5M1331.4 410.7h1.5M1351.1 398.0h1.5M1370.8 385.3h1.5M1390.4 372.5h1.5M1410.1 359.8h1.5M1429.7 347.1h1.5M917.4 710.1h1.5M937.1 697.4h1.5M956.8 684.6h1.5M976.4 671.9h1.5M996.1 659.2h1.5M1015.7 646.5h1.5M1035.4 633.7h1.5M1055.0 621.0h1.5M1074.7 608.3h1.5M1094.4 595.5h1.5M1114.0 582.8h1.5M1133.7 570.1h1.5M1153.4 557.3h1.5M1173.0 544.6h1.5M1192.7 531.9h1.5M1212.3 519.1h1.5M1232.0 506.4h1.5M1251.7 493.7h1.5M1271.3 481.0h1.5M1291.0 468.2h1.5M1310.6 455.5h1.5M1330.3 442.8h1.5M1350.0 430.0h1.5M1369.6 417.3h1.5M1389.3 404.6h1.5M1408.9 391.9h1.5M1428.6 379.1h1.5M1448.2 366.4h1.5M1467.9 353.7h1.5M936.0 729.4h1.5M955.6 716.7h1.5M975.3 704.0h1.5M994.9 691.2h1.5M1014.6 678.5h1.5M1034.2 665.8h1.5M1053.9 653.0h1.5M1073.6 640.3h1.5M1093.2 627.6h1.5M1112.9 614.8h1.5M1132.6 602.1h1.5M1152.2 589.4h1.5M1171.9 576.7h1.5M1191.5 563.9h1.5M1211.2 551.2h1.5M1230.9 538.5h1.5M1250.5 525.7h1.5M1270.2 513.0h1.5M1289.8 500.3h1.5M1309.5 487.5h1.5M1329.2 474.8h1.5M1348.8 462.1h1.5M1368.5 449.4h1.5M1388.1 436.6h1.5M1407.8 423.9h1.5M1427.5 411.2h1.5M1447.1 398.4h1.5M1466.8 385.7h1.5M1486.4 373.0h1.5M1506.1 360.2h1.5M993.8 723.3h1.5M1013.4 710.5h1.5M1033.1 697.8h1.5M1052.8 685.1h1.5M1072.4 672.3h1.5M1092.1 659.6h1.5M1111.8 646.9h1.5M1131.4 634.1h1.5M1151.1 621.4h1.5M1170.7 608.7h1.5M1190.4 596.0h1.5M1210.0 583.2h1.5M1229.7 570.5h1.5M1249.4 557.8h1.5M1269.0 545.0h1.5M1288.7 532.3h1.5M1308.3 519.6h1.5M1328.0 506.8h1.5M1347.7 494.1h1.5M1367.3 481.4h1.5M1387.0 468.7h1.5M1406.6 455.9h1.5M1426.3 443.2h1.5M1446.0 430.5h1.5M1465.6 417.7h1.5M1485.3 405.0h1.5M1504.9 392.3h1.5M1524.6 379.5h1.5M1544.3 366.8h1.5M1032.0 729.8h1.5M1051.6 717.1h1.5M1071.3 704.4h1.5M1091.0 691.6h1.5M1110.6 678.9h1.5M1130.3 666.2h1.5M1149.9 653.5h1.5M1169.6 640.7h1.5M1189.2 628.0h1.5M1208.9 615.3h1.5M1228.6 602.5h1.5M1248.2 589.8h1.5M1267.9 577.1h1.5M1287.5 564.4h1.5M1307.2 551.6h1.5M1326.9 538.9h1.5M1346.5 526.2h1.5M1366.2 513.4h1.5M1385.8 500.7h1.5M1405.5 488.0h1.5M1425.2 475.2h1.5M1444.8 462.5h1.5M1464.5 449.8h1.5M1484.2 437.0h1.5M1503.8 424.3h1.5M1523.5 411.6h1.5M1543.1 398.9h1.5M1562.8 386.1h1.5M1582.5 373.4h1.5M1089.8 723.7h1.5M1109.5 711.0h1.5M1129.1 698.2h1.5M1148.8 685.5h1.5M1168.5 672.8h1.5M1188.1 660.0h1.5M1207.8 647.3h1.5M1227.4 634.6h1.5M1247.1 621.9h1.5M1266.8 609.1h1.5M1286.4 596.4h1.5M1306.1 583.7h1.5M1325.7 570.9h1.5M1345.4 558.2h1.5M1365.1 545.5h1.5M1384.7 532.7h1.5M1404.4 520.0h1.5M1424.0 507.3h1.5M1443.7 494.6h1.5M1463.4 481.8h1.5M1483.0 469.1h1.5M1502.7 456.4h1.5M1522.3 443.6h1.5M1542.0 430.9h1.5M1561.7 418.2h1.5M1581.3 405.4h1.5M1601.0 392.7h1.5M1128.0 730.3h1.5M1147.6 717.5h1.5M1167.3 704.8h1.5M1187.0 692.1h1.5M1206.6 679.3h1.5M1226.3 666.6h1.5M1245.9 653.9h1.5M1265.6 641.2h1.5M1285.3 628.4h1.5M1304.9 615.7h1.5M1324.6 603.0h1.5M1344.2 590.2h1.5M1363.9 577.5h1.5M1383.6 564.8h1.5M1403.2 552.0h1.5M1422.9 539.3h1.5M1442.5 526.6h1.5M1462.2 513.9h1.5M1481.9 501.1h1.5M1501.5 488.4h1.5M1521.2 475.7h1.5M1540.8 462.9h1.5M1560.5 450.2h1.5M1580.2 437.5h1.5M1599.8 424.8h1.5M1185.8 724.1h1.5M1205.5 711.4h1.5M1225.1 698.7h1.5M1244.8 685.9h1.5M1264.5 673.2h1.5M1284.1 660.5h1.5M1303.8 647.7h1.5M1323.5 635.0h1.5M1343.1 622.3h1.5M1362.8 609.5h1.5M1382.4 596.8h1.5M1402.1 584.1h1.5M1421.8 571.4h1.5M1441.4 558.6h1.5M1461.1 545.9h1.5M1480.7 533.2h1.5M1500.4 520.4h1.5M1520.0 507.7h1.5M1539.7 495.0h1.5M1559.4 482.2h1.5M1579.0 469.5h1.5M1598.7 456.8h1.5M1243.7 718.0h1.5M1263.3 705.2h1.5M1283.0 692.5h1.5M1302.7 679.8h1.5M1322.3 667.1h1.5M1342.0 654.3h1.5M1361.6 641.6h1.5M1381.3 628.9h1.5M1401.0 616.1h1.5M1420.6 603.4h1.5M1440.3 590.7h1.5M1459.9 577.9h1.5M1479.6 565.2h1.5M1499.2 552.5h1.5M1518.9 539.8h1.5M1538.6 527.0h1.5M1558.2 514.3h1.5M1577.9 501.6h1.5M1597.5 488.8h1.5M1281.9 724.5h1.5M1301.5 711.8h1.5M1321.2 699.1h1.5M1340.8 686.4h1.5M1360.5 673.6h1.5M1380.2 660.9h1.5M1399.8 648.2h1.5M1419.5 635.4h1.5M1439.1 622.7h1.5M1458.8 610.0h1.5M1478.5 597.2h1.5M1498.1 584.5h1.5M1517.8 571.8h1.5M1537.4 559.1h1.5M1557.1 546.3h1.5M1576.8 533.6h1.5M1596.4 520.9h1.5M1339.7 718.4h1.5M1359.3 705.7h1.5M1379.0 692.9h1.5M1398.7 680.2h1.5M1418.3 667.5h1.5M1438.0 654.8h1.5M1457.6 642.0h1.5M1477.3 629.3h1.5M1497.0 616.6h1.5M1516.6 603.8h1.5M1536.3 591.1h1.5M1555.9 578.4h1.5M1575.6 565.6h1.5M1595.3 552.9h1.5M1377.9 725.0h1.5M1397.5 712.2h1.5M1417.2 699.5h1.5M1436.8 686.8h1.5M1456.5 674.1h1.5M1476.2 661.3h1.5M1495.8 648.6h1.5M1515.5 635.9h1.5M1535.2 623.1h1.5M1554.8 610.4h1.5M1574.5 597.7h1.5M1594.1 584.9h1.5M1435.7 718.8h1.5M1455.4 706.1h1.5M1475.0 693.4h1.5M1494.7 680.6h1.5M1514.4 667.9h1.5M1534.0 655.2h1.5M1553.7 642.5h1.5M1573.3 629.7h1.5M1593.0 617.0h1.5M1473.9 725.4h1.5M1493.5 712.7h1.5M1513.2 700.0h1.5M1532.9 687.2h1.5M1552.5 674.5h1.5M1572.2 661.8h1.5M1591.8 649.0h1.5M1531.7 719.3h1.5M1551.4 706.5h1.5M1571.0 693.8h1.5M1590.7 681.1h1.5" stroke="#989898" stroke-width="1.500" fill="none"/><polygon points="1139.0,318.0 1356.0,356.0 1356.0,513.0 1139.1,476.4" fill="url(#gback)" /><polygon points="1062.4,368.0 1139.0,317.0 1139.1,476.4 1062.6,525.9" fill="url(#gdoor)" /><polygon points="1139.1,330.0 1142.5,330.5 1142.5,477.0 1139.1,476.4" fill="#d4d4d4" /><polygon points="1082.5,392.0 1106.0,376.4 1113.8,376.2 1113.8,446.2 1082.5,466.5" fill="#202020" /><polygon points="1113.8,376.2 1121.2,375.0 1121.2,442.5 1113.8,446.2" fill="#f3f3f3" /><polygon points="1082.3,466.5 1113.7,445.9 1121.2,442.6 1121.2,447.1 1082.3,472.2" fill="#e4e6e8" /><polygon points="1054.7,364.0 1062.4,362.5 1062.6,525.9 1055.0,524.6" fill="#f3f3f3" /><polygon points="1078.3,513.8 1080.5,517.3 1085.3,518.5 1081.5,521.5 1080.5,526.3 1076.5,526.3 1076.1,522.1 1071.3,520.5 1075.5,517.7" fill="#1fe01f" /><polygon points="1076.5,521.8 1080.5,521.5 1080.5,526.3 1076.5,526.3" fill="#17c417" /><polygon points="1098.3,501.2 1100.5,504.7 1105.3,505.9 1101.5,508.9 1100.5,513.7 1096.5,513.7 1096.1,509.5 1091.3,507.9 1095.5,505.1" fill="#1fe01f" /><polygon points="1096.5,509.2 1100.5,508.9 1100.5,513.7 1096.5,513.7" fill="#17c417" /><polygon points="1117.8,488.7 1120.0,492.2 1124.8,493.4 1121.0,496.4 1120.0,501.2 1116.0,501.2 1115.6,497.0 1110.8,495.4 1115.0,492.6" fill="#1fe01f" /><polygon points="1116.0,496.7 1120.0,496.4 1120.0,501.2 1116.0,501.2" fill="#17c417" /><polygon points="1175.5,481.8 1177.7,485.3 1182.5,486.5 1178.7,489.5 1177.7,494.3 1173.7,494.3 1173.3,490.1 1168.5,488.5 1172.7,485.7" fill="#1fe01f" /><polygon points="1173.7,489.8 1177.7,489.5 1177.7,494.3 1173.7,494.3" fill="#17c417" /><polygon points="1215.5,486.0 1217.7,489.5 1222.5,490.7 1218.7,493.7 1217.7,498.5 1213.7,498.5 1213.3,494.3 1208.5,492.7 1212.7,489.9" fill="#1fe01f" /><polygon points="1213.7,494.0 1217.7,493.7 1217.7,498.5 1213.7,498.5" fill="#17c417" /><polygon points="1252.1,494.8 1254.3,498.3 1259.1,499.5 1255.3,502.5 1254.3,507.3 1250.3,507.3 1249.9,503.1 1245.1,501.5 1249.3,498.7" fill="#1fe01f" /><polygon points="1250.3,502.8 1254.3,502.5 1254.3,507.3 1250.3,507.3" fill="#17c417" /><polygon points="1328.6,508.0 1330.8,511.5 1335.6,512.7 1331.8,515.7 1330.8,520.5 1326.8,520.5 1326.4,516.3 1321.6,514.7 1325.8,511.9" fill="#1fe01f" /><polygon points="1326.8,516.0 1330.8,515.7 1330.8,520.5 1326.8,520.5" fill="#17c417" /><polygon points="1279.7,470.0 1290.4,470.0 1290.4,567.2 1279.7,565.3" fill="#d8d8d8" /><polygon points="1290.4,470.0 1296.7,470.0 1296.7,563.4 1290.4,567.2" fill="#e9e9e9" /><polygon points="1280.9,572.7 1286.4,568.1 1289.7,568.1 1294.9,571.0 1288.4,574.7" fill="#1fd21f" /><polygon points="1286.4,568.1 1289.7,568.1 1288.9,565.5 1287.1,565.5" fill="#18b818" /><polygon points="1060.5,361.5 1278.0,394.0 1278.0,403.5 1062.5,371.0" fill="#ededed" /><polygon points="1138.0,308.0 1060.5,361.5 1278.0,394.0 1284.0,393.0 1214.5,446.0 1215.3,450.3 1362.0,479.5 1519.5,375.0" fill="url(#gslab)" /><polygon points="1215.3,450.3 1356.0,478.5 1356.0,485.0 1217.8,457.0" fill="#e9e9e9" /><polygon points="1362.0,479.5 1519.5,375.1 1519.5,382.2 1362.0,486.6" fill="#cdcfd0" /><polygon points="1362.0,480.7 1519.5,376.3 1519.5,378.5 1362.0,482.9" fill="#d6d7d8" /><polygon points="1362.0,486.6 1519.5,382.2 1519.5,385.8 1362.0,490.2" fill="#9ea1a4" /><polygon points="1370.5,484.6 1512.0,390.8 1512.0,409.1 1370.5,502.9" fill="#d7d7d7" /><polygon points="1370.5,502.5 1512.0,408.7 1512.0,410.1 1370.5,503.9" fill="#f4f4f4" /><polygon points="1205.5,443.8 1276.5,395.5 1283.7,392.8 1293.0,395.2 1214.0,445.8" fill="#aeb0b2" /><polygon points="1293.0,395.2 1293.0,399.4 1215.3,450.3 1214.0,445.8" fill="#e2e2e2" /><polygon points="1205.5,443.8 1214.0,445.8 1214.3,453.8 1205.5,452.2" fill="#9b9b9b" /><line x1="984.5" y1="412.0" x2="1060.0" y2="363.5" stroke="#6cb2db" stroke-width="5.6" stroke-linecap="butt"/><line x1="987.1" y1="413.6" x2="1062.6" y2="365.1" stroke="#a3e0fb" stroke-width="1.3" /><line x1="982.1" y1="410.3" x2="1057.6" y2="361.8" stroke="#8ccaec" stroke-width="1.1" /><line x1="1063.5" y1="423.0" x2="1135.0" y2="376.8" stroke="#6cb2db" stroke-width="5.6" stroke-linecap="butt"/><line x1="1066.1" y1="424.6" x2="1137.6" y2="378.4" stroke="#a3e0fb" stroke-width="1.3" /><line x1="1061.1" y1="421.3" x2="1132.6" y2="375.1" stroke="#8ccaec" stroke-width="1.1" /><circle cx="1135.500" cy="376.400" r="2.800" fill="#6cb2db"/><line x1="1140.5" y1="436.2" x2="1211.5" y2="389.6" stroke="#6cb2db" stroke-width="5.6" stroke-linecap="butt"/><line x1="1143.1" y1="437.8" x2="1214.1" y2="391.2" stroke="#a3e0fb" stroke-width="1.3" /><line x1="1138.1" y1="434.5" x2="1209.1" y2="387.9" stroke="#8ccaec" stroke-width="1.1" /><circle cx="1212" cy="389.200" r="2.800" fill="#6cb2db"/><polygon points="981.4,409.5 1205.3,445.3 1205.3,457.9 987.0,422.6 981.4,419.0" fill="url(#gbeam)" /><line x1="982.0" y1="410.3" x2="1205.3" y2="446.0" stroke="#86c6e8" stroke-width="1.2" /><line x1="987.0" y1="422.0" x2="1203.0" y2="457.2" stroke="#5596c3" stroke-width="1.2" /><polygon points="973.2,414.0 976.3,412.0 976.3,576.0 973.2,575.5" fill="#b6eeff" /><polygon points="976.3,412.0 982.0,413.0 982.0,577.0 976.3,576.0" fill="#6db3dc" /><polygon points="982.0,416.0 987.0,421.5 987.0,574.0 982.0,577.0" fill="#abeaff" /><path d="M973.200 415.500c0-3 2.500-5.500 6.500-6l3.500 .6 3.800 5.500-5 3z" fill="#70b6df"/><polygon points="973.5,583.8 979.0,579.2 982.3,579.2 987.5,582.1 981.0,585.8" fill="#1fd21f" /><polygon points="979.0,579.2 982.3,579.2 981.5,576.6 979.7,576.6" fill="#18b818" /><polygon points="1200.7,455.3 1212.0,455.3 1212.0,618.3 1200.7,616.4" fill="url(#gcl)" /><polygon points="1212.0,455.3 1217.8,455.3 1217.8,614.5 1212.0,618.3" fill="#e4e4e4" /><polygon points="1201.0,454.2 1212.0,455.8 1217.8,453.8 1217.8,456.0 1212.0,457.5 1201.0,456.0" fill="#c98f80" /><polygon points="1202.5,624.2 1208.0,619.6 1211.3,619.6 1216.5,622.5 1210.0,626.2" fill="#1fd21f" /><polygon points="1208.0,619.6 1211.3,619.6 1210.5,617.0 1208.7,617.0" fill="#18b818" /><polygon points="1353.7,481.0 1365.0,481.0 1365.0,644.6 1353.7,642.8" fill="url(#gcn)" /><polygon points="1365.0,481.0 1370.7,481.0 1370.7,641.3 1365.0,644.6" fill="#dcdcdc" /><polygon points="1354.0,480.0 1365.0,482.0 1370.7,479.5 1362.5,478.2" fill="#c99585" /><polygon points="1355.5,650.5 1361.0,645.9 1364.3,645.9 1369.5,648.8 1363.0,652.5" fill="#1fd21f" /><polygon points="1361.0,645.9 1364.3,645.9 1363.5,643.3 1361.7,643.3" fill="#18b818" /><polygon points="1511.0,377.5 1523.0,377.5 1523.0,541.8 1511.0,540.0" fill="#dddddd" /><polygon points="1523.0,377.5 1528.0,377.5 1528.0,537.5 1523.0,541.8" fill="#ebebeb" /><polygon points="1514.5,376.0 1520.0,373.8 1524.5,376.0 1519.5,378.2" fill="#c99585" /><polygon points="1512.5,547.8 1518.0,543.2 1521.3,543.2 1526.5,546.1 1520.0,549.8" fill="#1fd21f" /><polygon points="1518.0,543.2 1521.3,543.2 1520.5,540.6 1518.7,540.6" fill="#18b818" /><polygon points="1553.6,240.2 1581.2,244.0 1581.2,272.8 1553.6,269.0" fill="#bdbdbd" /><polygon points="1581.2,244.0 1595.0,235.2 1595.0,265.3 1581.2,272.8" fill="#9a9a9a" /><polygon points="1553.6,240.2 1568.0,230.8 1595.0,235.2 1581.2,244.0" fill="#8b8b8b" /><line x1="1559.7" y1="241.0" x2="1559.7" y2="269.8" stroke="#7a7a7a" stroke-width="0.7" /><line x1="1553.6" y1="246.5" x2="1581.2" y2="250.3" stroke="#7a7a7a" stroke-width="0.7" /><line x1="1584.2" y1="242.1" x2="1584.2" y2="271.5" stroke="#777" stroke-width="0.6" /><line x1="1581.2" y1="250.3" x2="1595.0" y2="241.8" stroke="#777" stroke-width="0.6" /><line x1="1556.8" y1="238.1" x2="1584.2" y2="242.1" stroke="#6f6f6f" stroke-width="0.6" /><line x1="1559.7" y1="241.0" x2="1573.9" y2="231.8" stroke="#6f6f6f" stroke-width="0.6" /><line x1="1575.1" y1="243.2" x2="1575.1" y2="272.0" stroke="#7a7a7a" stroke-width="0.7" /><line x1="1553.6" y1="262.7" x2="1581.2" y2="266.5" stroke="#7a7a7a" stroke-width="0.7" /><line x1="1592.0" y1="237.1" x2="1592.0" y2="266.5" stroke="#777" stroke-width="0.6" /><line x1="1581.2" y1="266.5" x2="1595.0" y2="258.7" stroke="#777" stroke-width="0.6" /><line x1="1564.8" y1="232.9" x2="1592.0" y2="237.1" stroke="#6f6f6f" stroke-width="0.6" /><line x1="1575.1" y1="243.2" x2="1589.1" y2="234.2" stroke="#6f6f6f" stroke-width="0.6" /><text x="1564" y="259.500" font-family="Liberation Sans" font-size="5.500" font-weight="bold" fill="#1fc01f">-Y</text><text x="1586" y="256" font-family="Liberation Sans" font-size="5" font-weight="bold" fill="#c22">X</text><text x="1571" y="240" font-family="Liberation Sans" font-size="3.500" fill="#4a7ab0">+Z</text><line x1="908.9" y1="222.0" x2="908.9" y2="729.0" stroke="#9a9a9a" stroke-width="0.6" /><line x1="1603.7" y1="222.0" x2="1603.7" y2="729.0" stroke="#8a8a8a" stroke-width="0.8" /></svg></div><span class=a style="left:140.0px;top:49.2px;line-height:7px;font-size:5.300px;color:#c8c8c8">Visibility mode</span><div class=a style="left:0;top:553.400px;width:835px;height:12px;background:#f8f8f8"></div><svg class=tbi style="left:1.0px;top:555.0px;overflow:visible" viewBox="0 0 10 10"><path d="M2 7l3-5 3 5z" fill="none" stroke="#3f78c5" stroke-width=".9"/><path d="M1 8.500h8" stroke="#3f78c5" stroke-width=".7"/><circle cx="2.500" cy="2.500" r="1" fill="#f2d21a"/></svg><div class=a style="left:11.500px;top:555.200px;width:88px;height:8.400px;background:#e9eaf4"></div><div class=a style="left:13px;top:556.500px;width:6px;height:6px;background:#c9f0f0"></div><span class=a style="left:20.0px;top:556.1px;line-height:7px;font-size:4.800px;color:#111">1 - Global XYZ</span><svg class=a style="left:93.500px;top:557.800px" width="4.500" height="4" viewBox="0 0 10 8"><path d="M1 2l4 4 4-4" fill="none" stroke="#333" stroke-width="1.300"/></svg><div class=sep style="left:102.2px;top:555.1px"></div><svg class=tbi style="left:102.8px;top:555.1px;overflow:visible" viewBox="0 0 10 10"><path d="M2 7l3-5 3 5z" fill="none" stroke="#3f78c5" stroke-width=".9"/><path d="M1 8.500h8" stroke="#3f78c5" stroke-width=".7"/><circle cx="2.500" cy="2.500" r="1" fill="#f2d21a"/></svg><svg class=tbi style="left:113.4px;top:555.1px;overflow:visible" viewBox="0 0 10 10"><path d="M5 1.500v7M2 4l3-2.500L8 4" fill="none" stroke="#3f78c5" stroke-width="1"/><path d="M2 8h6" stroke="#2fa43a" stroke-width=".8"/></svg><svg class=tbi style="left:123.7px;top:555.1px;overflow:visible" viewBox="0 0 10 10"><path d="M1.500 5h7M6 2.500L8.500 5 6 7.500" fill="none" stroke="#3f78c5" stroke-width="1"/></svg><svg class=tbi style="left:133.8px;top:555.1px;overflow:visible" viewBox="0 0 10 10"><path d="M2 2l6 6M8 2L2 8" stroke="#3f78c5" stroke-width=".9"/><circle cx="5" cy="5" r="1.200" fill="#7fb2e8"/></svg><svg class=tbi style="left:143.4px;top:555.1px;overflow:visible" viewBox="0 0 10 10"><rect x="1.500" y="1.500" width="3" height="7" fill="none" stroke="#3f78c5" stroke-width=".8"/><rect x="5.500" y="1.500" width="3" height="7" fill="none" stroke="#3f78c5" stroke-width=".8"/></svg><div class=sep style="left:154.5px;top:555.1px"></div><svg class=tbi style="left:156.3px;top:555.1px;overflow:visible" viewBox="0 0 10 10"><rect x="1.500" y="2" width="7" height="6" fill="#f5e9a0" stroke="#a58a20" stroke-width=".6"/><path d="M3 4h4M3 6h4" stroke="#3f78c5" stroke-width=".6"/></svg><svg class=tbi style="left:166.4px;top:555.1px;overflow:visible" viewBox="0 0 10 10"><rect x="1.500" y="2" width="7" height="6" fill="#f5e9a0" stroke="#a58a20" stroke-width=".6"/><path d="M3 4h4M3 6h4" stroke="#3f78c5" stroke-width=".6"/></svg><svg class=tbi style="left:176.5px;top:555.1px;overflow:visible" viewBox="0 0 10 10"><path d="M2 7l3-5 3 5z" fill="none" stroke="#3f78c5" stroke-width=".9"/><path d="M1 8.500h8" stroke="#3f78c5" stroke-width=".7"/><circle cx="2.500" cy="2.500" r="1" fill="#f2d21a"/></svg><div class=dd style="left:186.8px;top:558.8px"></div><svg class=tbi style="left:191.6px;top:555.1px;overflow:visible" viewBox="0 0 10 10"><path d="M2 7l3-5 3 5z" fill="none" stroke="#3f78c5" stroke-width=".9"/><path d="M1 8.500h8" stroke="#3f78c5" stroke-width=".7"/><circle cx="2.500" cy="2.500" r="1" fill="#f2d21a"/></svg><svg class=tbi style="left:201.7px;top:555.1px;overflow:visible" viewBox="0 0 10 10"><path d="M5 1.500v7M2 4l3-2.500L8 4" fill="none" stroke="#3f78c5" stroke-width="1"/><path d="M2 8h6" stroke="#2fa43a" stroke-width=".8"/></svg><svg class=tbi style="left:211.8px;top:555.1px;overflow:visible" viewBox="0 0 10 10"><rect x="1.500" y="2" width="7" height="6" fill="#f5e9a0" stroke="#a58a20" stroke-width=".6"/><path d="M3 4h4M3 6h4" stroke="#3f78c5" stroke-width=".6"/></svg><div class=sep style="left:223.4px;top:555.1px"></div><svg class=tbi style="left:224.7px;top:555.1px;overflow:visible" viewBox="0 0 10 10"><path d="M2 8L5 2l3 4" fill="none" stroke="#d8262c" stroke-width=".8"/></svg><div class=dd style="left:235.0px;top:558.8px"></div><svg class=tbi style="left:239.8px;top:555.1px;overflow:visible" viewBox="0 0 10 10"><rect x="1.500" y="1.500" width="3" height="7" fill="none" stroke="#3f78c5" stroke-width=".8"/><rect x="5.500" y="1.500" width="3" height="7" fill="none" stroke="#3f78c5" stroke-width=".8"/></svg><div class=dd style="left:250.7px;top:558.8px"></div><div class=sep style="left:257.4px;top:555.1px"></div><svg class=tbi style="left:257.5px;top:555.1px;overflow:visible" viewBox="0 0 10 10"><path d="M1.500 2v6.500M4 2v6.500M6.500 2v6.500" stroke="#777" stroke-width=".6"/></svg><svg class=tbi style="left:267.6px;top:555.1px;overflow:visible" viewBox="0 0 10 10"><path d="M1.500 1.500L5 8.500 8.500 1.500M5 1.500v7" fill="none" stroke="#777" stroke-width=".6"/></svg><svg class=tbi style="left:277.7px;top:555.1px;overflow:visible" viewBox="0 0 10 10"><path d="M2 8L5 2l3 4" fill="none" stroke="#d8262c" stroke-width=".8"/></svg><div class=dd style="left:288.5px;top:558.8px"></div><svg class=tbi style="left:293.3px;top:555.1px;overflow:visible" viewBox="0 0 10 10"><path d="M2 8.500L8 1.500" stroke="#d8262c" stroke-width=".9"/></svg><svg class=tbi style="left:303.4px;top:555.1px;overflow:visible" viewBox="0 0 10 10"><path d="M2 8.500c0-4 2-6 6-6.500" fill="none" stroke="#d8262c" stroke-width=".9"/></svg><svg class=tbi style="left:313.5px;top:555.1px;overflow:visible" viewBox="0 0 10 10"><path d="M1.500 7.500L6 2.500M4 8.500L8.500 3.500" stroke="#d8262c" stroke-width=".8"/></svg><svg class=tbi style="left:323.6px;top:555.1px;overflow:visible" viewBox="0 0 10 10"><path d="M2 8.500L8 1.500M4 3l3 3" stroke="#d8262c" stroke-width=".8"/></svg><svg class=tbi style="left:333.2px;top:555.1px;overflow:visible" viewBox="0 0 10 10"><path d="M1.500 7.500L6 2.500M4 8.500L8.500 3.500" stroke="#d8262c" stroke-width=".8"/></svg><svg class=tbi style="left:343.3px;top:555.1px;overflow:visible" viewBox="0 0 10 10"><path d="M2 2l6 6M8 2L2 8M5 1v8" stroke="#999" stroke-width=".6"/></svg><svg class=tbi style="left:353.4px;top:555.1px;overflow:visible" viewBox="0 0 10 10"><path d="M2 3l6 4M2 7l6-4" stroke="#d8262c" stroke-width=".9"/><circle cx="8" cy="3" r=".8" fill="#d8262c"/></svg><svg class=tbi style="left:363.4px;top:555.1px;overflow:visible" viewBox="0 0 10 10"><path d="M2 8L5 2l3 4" fill="none" stroke="#d8262c" stroke-width=".8"/></svg><div class=sep style="left:374.8px;top:555.1px"></div><svg class=tbi style="left:376.6px;top:555.1px;overflow:visible" viewBox="0 0 10 10"><path d="M2 8L5 2l3 4" fill="none" stroke="#d8262c" stroke-width=".8"/></svg><div class=dd style="left:386.9px;top:558.8px"></div><svg class=tbi style="left:391.7px;top:555.1px;overflow:visible" viewBox="0 0 10 10"><path d="M1.500 7.500L6 2.500M4 8.500L8.500 3.500" stroke="#d8262c" stroke-width=".8"/></svg><svg class=tbi style="left:401.8px;top:555.1px;overflow:visible" viewBox="0 0 10 10"><path d="M2 8.500L8 1.500M4 3l3 3" stroke="#d8262c" stroke-width=".8"/></svg><svg class=tbi style="left:411.4px;top:555.1px;overflow:visible" viewBox="0 0 10 10"><path d="M1.500 7.500L6 2.500M4 8.500L8.500 3.500" stroke="#d8262c" stroke-width=".8"/></svg><svg class=tbi style="left:419.5px;top:555.1px;overflow:visible" viewBox="0 0 10 10"><path d="M2 3l6 4M2 7l6-4" stroke="#d8262c" stroke-width=".9"/><circle cx="8" cy="3" r=".8" fill="#d8262c"/></svg><svg class=tbi style="left:568.9px;top:555.1px;overflow:visible" viewBox="0 0 10 10"><rect x="-.6" y="-1.200" width="11.200" height="12.400" fill="#cfe4f9" stroke="#9cc6ee" stroke-width=".4"/><path d="M1.500 8.500V3M1.500 8.500h7" stroke="#8b8f94" stroke-width=".8" fill="none"/><path d="M3.500 5l2.500-2 2.500 2-2.500 1.500z" fill="#2c4f8f"/></svg><svg class=tbi style="left:581.7px;top:555.1px;overflow:visible" viewBox="0 0 10 10"><rect x="-.6" y="-1.200" width="11.200" height="12.400" fill="#cfe4f9" stroke="#9cc6ee" stroke-width=".4"/><rect x="1.500" y="2" width="7" height="6" fill="#f5e9a0" stroke="#a58a20" stroke-width=".6"/><path d="M3 4h4M3 6h4" stroke="#3f78c5" stroke-width=".6"/></svg><svg class=tbi style="left:592.3px;top:555.1px;overflow:visible" viewBox="0 0 10 10"><rect x="-.6" y="-1.200" width="11.200" height="12.400" fill="#cfe4f9" stroke="#9cc6ee" stroke-width=".4"/><path d="M1.500 8.500V3M1.500 8.500h7" stroke="#8b8f94" stroke-width=".8" fill="none"/><path d="M3.500 5l2.500-2 2.500 2-2.500 1.500z" fill="#2c4f8f"/></svg><svg class=tbi style="left:604.5px;top:555.1px;overflow:visible" viewBox="0 0 10 10"><rect x="1.500" y="2" width="7" height="6" fill="#f5e9a0" stroke="#a58a20" stroke-width=".6"/><path d="M3 4h4M3 6h4" stroke="#3f78c5" stroke-width=".6"/></svg><svg class=tbi style="left:615.5px;top:555.1px;overflow:visible" viewBox="0 0 10 10"><rect x="-.6" y="-1.200" width="11.200" height="12.400" fill="#cfe4f9" stroke="#9cc6ee" stroke-width=".4"/><path d="M1.500 8.500V3M1.500 8.500h7" stroke="#8b8f94" stroke-width=".8" fill="none"/><path d="M3.500 5l2.500-2 2.500 2-2.500 1.500z" fill="#2c4f8f"/></svg><svg class=tbi style="left:629.8px;top:555.1px;overflow:visible" viewBox="0 0 10 10"><path d="M2 2v6h6" fill="none" stroke="#555" stroke-width=".8"/></svg><svg class=tbi style="left:644.4px;top:555.1px;overflow:visible" viewBox="0 0 10 10"><rect x="-.6" y="-1.200" width="11.200" height="12.400" fill="#cfe4f9" stroke="#9cc6ee" stroke-width=".4"/><path d="M1.500 6l3-4 4 2-3 4z" fill="#3f78c5"/><path d="M2 4l6 2.500M3 7.500l4-5" stroke="#d8262c" stroke-width=".9"/></svg><svg class=tbi style="left:654.2px;top:555.1px;overflow:visible" viewBox="0 0 10 10"><rect x="-.6" y="-1.200" width="11.200" height="12.400" fill="#cfe4f9" stroke="#9cc6ee" stroke-width=".4"/><path d="M2.500 4.500a2.500 2.500 0 0 1 5 0V8h-1.500V4.500a1 1 0 0 0-2 0V8H2.500z" fill="#2c4f9f"/><path d="M2.500 7h1.500M6 7h1.500" stroke="#d8262c" stroke-width="1"/></svg><svg class=tbi style="left:663.9px;top:555.1px;overflow:visible" viewBox="0 0 10 10"><rect x="-.6" y="-1.200" width="11.200" height="12.400" fill="#cfe4f9" stroke="#9cc6ee" stroke-width=".4"/><rect x="2.500" y="2.500" width="5" height="5" fill="none" stroke="#444" stroke-width=".8"/></svg><svg class=tbi style="left:674.3px;top:555.1px;overflow:visible" viewBox="0 0 10 10"><rect x="-.6" y="-1.200" width="11.200" height="12.400" fill="#cfe4f9" stroke="#9cc6ee" stroke-width=".4"/><circle cx="5" cy="5" r="2.600" fill="none" stroke="#444" stroke-width=".9"/></svg><svg class=tbi style="left:684.0px;top:555.1px;overflow:visible" viewBox="0 0 10 10"><rect x="2.500" y="2.500" width="5" height="5" fill="none" stroke="#444" stroke-width=".8"/></svg><svg class=tbi style="left:693.8px;top:555.1px;overflow:visible" viewBox="0 0 10 10"><path d="M2 2v6h6" fill="none" stroke="#555" stroke-width=".8"/></svg><svg class=tbi style="left:703.5px;top:555.1px;overflow:visible" viewBox="0 0 10 10"><path d="M2 8l6-6" stroke="#555" stroke-width=".8"/></svg><svg class=tbi style="left:713.6px;top:555.1px;overflow:visible" viewBox="0 0 10 10"><path d="M2 6.500l4-3.500 2 1.500-4 3.500z" fill="none" stroke="#555" stroke-width=".7"/></svg><svg class=tbi style="left:723.6px;top:555.1px;overflow:visible" viewBox="0 0 10 10"><circle cx="5" cy="5" r="2.600" fill="none" stroke="#444" stroke-width=".9"/></svg><svg class=tbi style="left:734.0px;top:555.1px;overflow:visible" viewBox="0 0 10 10"><circle cx="5" cy="5" r="2.600" fill="none" stroke="#444" stroke-width=".9"/></svg><svg class=tbi style="left:744.0px;top:555.1px;overflow:visible" viewBox="0 0 10 10"><path d="M2 6.500l4-3.500 2 1.500-4 3.500z" fill="none" stroke="#555" stroke-width=".7"/></svg><svg class=tbi style="left:753.8px;top:555.1px;overflow:visible" viewBox="0 0 10 10"><path d="M2 6.500l4-3.500 2 1.500-4 3.500z" fill="none" stroke="#555" stroke-width=".7"/></svg><svg class=tbi style="left:763.8px;top:555.1px;overflow:visible" viewBox="0 0 10 10"><path d="M2 6.500l4-3.500 2 1.500-4 3.500z" fill="none" stroke="#555" stroke-width=".7"/></svg><svg class=tbi style="left:773.6px;top:555.1px;overflow:visible" viewBox="0 0 10 10"><path d="M2 2l6 6M8 2L2 8M5 1v8" stroke="#999" stroke-width=".6"/></svg><svg class=tbi style="left:783.9px;top:555.1px;overflow:visible" viewBox="0 0 10 10"><rect x="-.6" y="-1.200" width="11.200" height="12.400" fill="#cfe4f9" stroke="#9cc6ee" stroke-width=".4"/><rect x="2" y="2" width="6" height="6" fill="#b9cbe0" stroke="#7d93ad" stroke-width=".6"/><path d="M2 4h6M2 6h6" stroke="#8ea6c2" stroke-width=".5"/></svg><svg class=tbi style="left:793.7px;top:555.1px;overflow:visible" viewBox="0 0 10 10"><path d="M2 2h1.500v6H2zM6.500 2H8v6H6.500zM2 2h6M2 8h6" stroke="#666" stroke-width=".6" fill="none"/></svg><svg class=tbi style="left:804.0px;top:555.1px;overflow:visible" viewBox="0 0 10 10"><rect x="-.6" y="-1.200" width="11.200" height="12.400" fill="#cfe4f9" stroke="#9cc6ee" stroke-width=".4"/><path d="M2 6.500l4-3.500 2 1.500-4 3.500z" fill="none" stroke="#555" stroke-width=".7"/></svg><svg class=tbi style="left:814.1px;top:555.1px;overflow:visible" viewBox="0 0 10 10"><rect x="-.6" y="-1.200" width="11.200" height="12.400" fill="#cfe4f9" stroke="#9cc6ee" stroke-width=".4"/><path d="M2 5h6" stroke="#333" stroke-width="1.200"/><path d="M1.500 3.500L3 5 1.500 6.500M8.500 3.500L7 5l1.500 1.500" stroke="#d8262c" stroke-width=".6" fill="none"/></svg><svg class=tbi style="left:824.1px;top:555.1px;overflow:visible" viewBox="0 0 10 10"><rect x="-.6" y="-1.200" width="11.200" height="12.400" fill="#cfe4f9" stroke="#9cc6ee" stroke-width=".4"/><path d="M5 2v4" stroke="#666" stroke-width=".8"/><circle cx="5" cy="7.500" r="1.200" fill="none" stroke="#666" stroke-width=".7"/></svg><svg class=tbi style="left:421.5px;top:555.1px;overflow:visible" viewBox="0 0 10 10"><path d="M2 3l6 4M2 7l6-4" stroke="#d8262c" stroke-width=".9"/><circle cx="8" cy="3" r=".8" fill="#d8262c"/></svg><div class=a style="left:0;top:565.400px;width:835px;height:6.600px;background:#ececf5"></div><span class=a style="left:523.5px;top:565.3px;line-height:7px;font-size:4.300px;color:#222">Visibility mode</span><span class=a style="left:607.5px;top:565.3px;line-height:7px;font-size:4.300px;color:#222">CS: Global XYZ</span><span class=a style="left:699.0px;top:565.3px;line-height:7px;font-size:4.300px;color:#222">Plane: XY</span><div class=a style="left:559.0px;top:566px;width:.5px;height:5.500px;background:#d0d0da"></div><div class=a style="left:663.0px;top:566px;width:.5px;height:5.500px;background:#d0d0da"></div><div class=a style="left:726.0px;top:566px;width:.5px;height:5.500px;background:#d0d0da"></div><div class=a style="left:760.0px;top:566px;width:.5px;height:5.500px;background:#d0d0da"></div><div class=a style="left:793.0px;top:566px;width:.5px;height:5.500px;background:#d0d0da"></div></div>
</body></html>
